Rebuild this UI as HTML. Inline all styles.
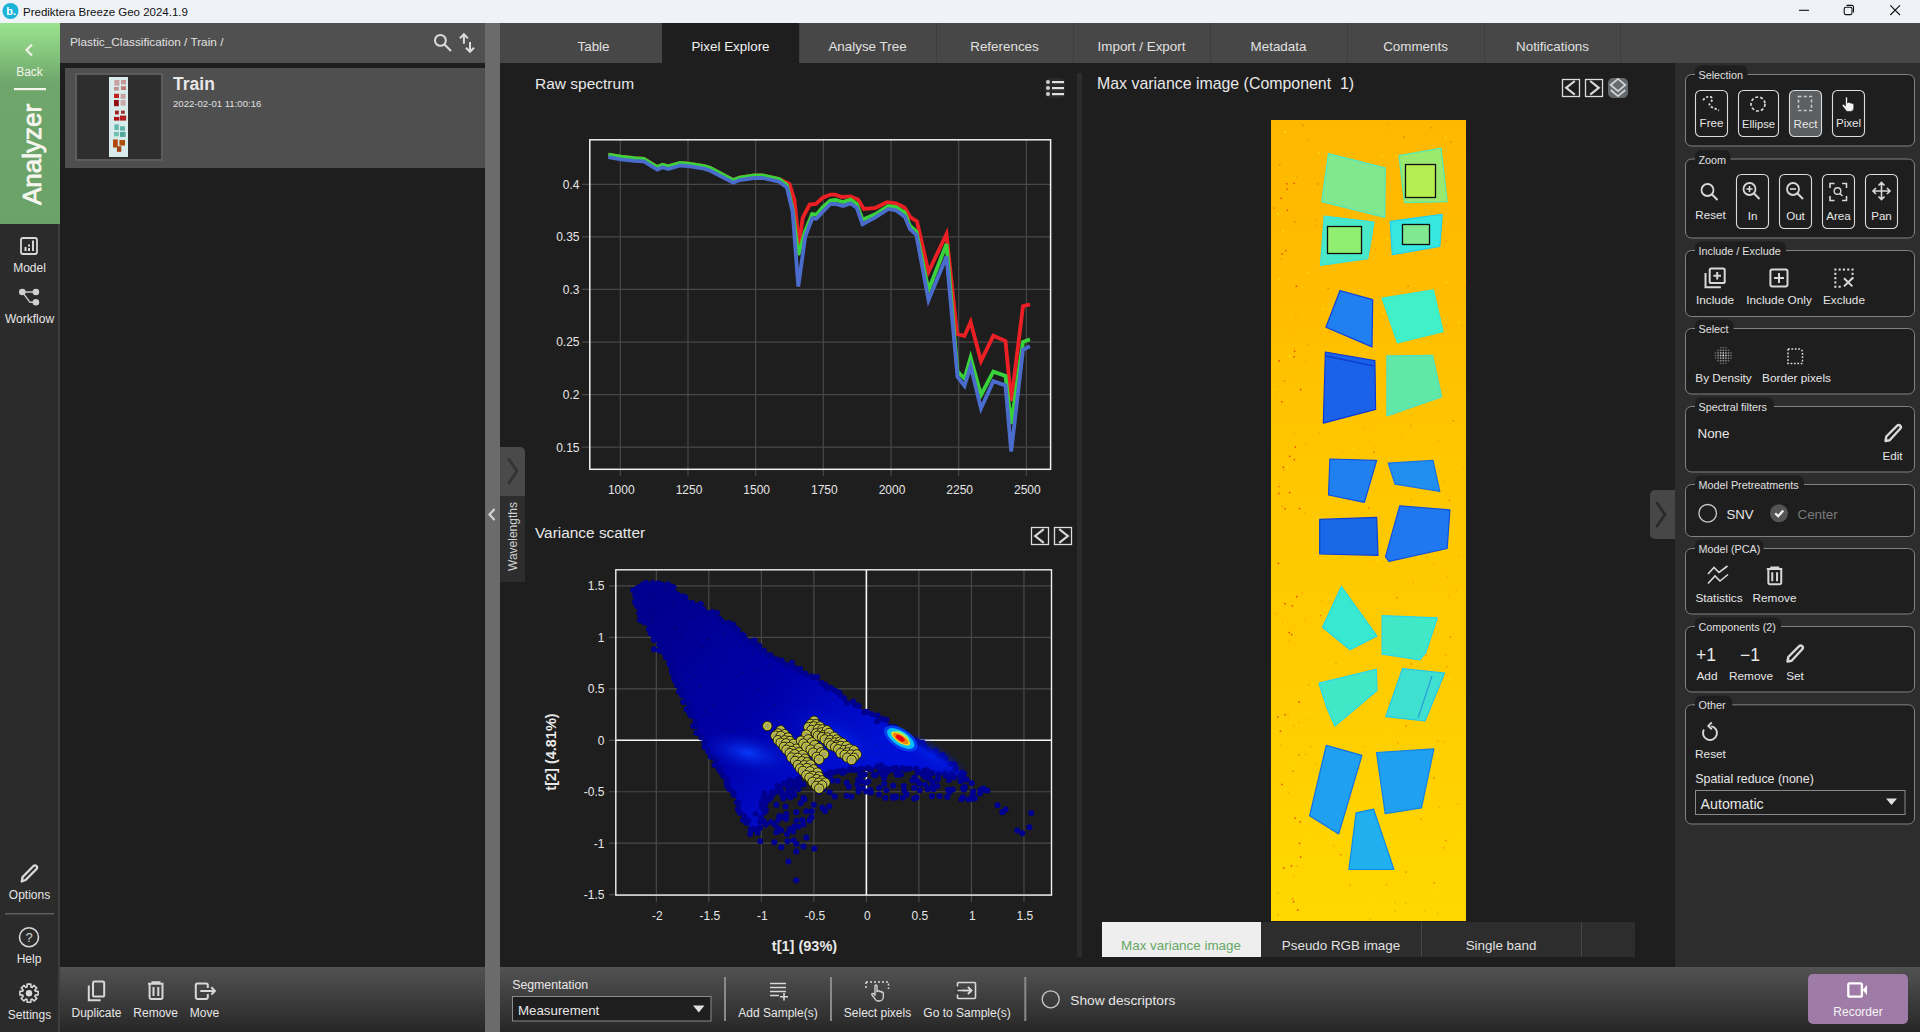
<!DOCTYPE html><html><head><meta charset="utf-8"><style>html,body{margin:0;padding:0;background:#1e1e1e;overflow:hidden}svg{display:block;font-family:"Liberation Sans",sans-serif}</style></head><body><svg width="1920" height="1032" viewBox="0 0 1920 1032"><defs>
<linearGradient id="gGreen" x1="0" y1="0" x2="0" y2="1">
 <stop offset="0" stop-color="#9be38e"/><stop offset="0.3" stop-color="#6ea66c"/><stop offset="1" stop-color="#6aa268"/>
</linearGradient>
<linearGradient id="gTool" x1="0" y1="0" x2="0" y2="1">
 <stop offset="0" stop-color="#525252"/><stop offset="1" stop-color="#272727"/>
</linearGradient>
<linearGradient id="gImg" x1="0" y1="0" x2="0" y2="1">
 <stop offset="0" stop-color="#ffb800"/><stop offset="0.2" stop-color="#ffbc00"/><stop offset="0.4" stop-color="#ffc600"/><stop offset="0.7" stop-color="#ffcc00"/><stop offset="1" stop-color="#ffd800"/>
</linearGradient>
<clipPath id="clipSc"><rect x="616" y="570" width="435" height="325"/></clipPath>
<clipPath id="clipRs"><rect x="590" y="140" width="460" height="329"/></clipPath>
</defs>
<rect x="0" y="0" width="1920" height="1032" fill="#1e1e1e" />
<rect x="0" y="0" width="1920" height="23" fill="#eff3f8" />
<circle cx="10.5" cy="11" r="8" fill="#1cb3d8"/>
<text x="6.3" y="15.3" font-size="11" fill="#ffffff" text-anchor="start" font-weight="bold" >b.</text>
<text x="23" y="15.8" font-size="11.5" fill="#111111" text-anchor="start" font-weight="normal" >Prediktera Breeze Geo 2024.1.9</text>
<line x1="1799" y1="10.3" x2="1809" y2="10.3" stroke="#111" stroke-width="1.1" />
<rect x="1844.2" y="7.2" width="7.8" height="7.4" rx="1.5" fill="none" stroke="#111" stroke-width="1.1"/>
<path d="M1846.5 5.4 h5.5 a1.5 1.5 0 0 1 1.5 1.5 v5.6" fill="none" stroke="#111" stroke-width="1.1"/>
<line x1="1890.3" y1="5.3" x2="1900" y2="15" stroke="#111" stroke-width="1.1" />
<line x1="1900" y1="5.3" x2="1890.3" y2="15" stroke="#111" stroke-width="1.1" />
<rect x="0" y="23" width="60" height="1009" fill="#2b2b2b" />
<rect x="58" y="224" width="2" height="808" fill="#3e3e3e" />
<rect x="0" y="23" width="60" height="201" fill="url(#gGreen)" />
<path d="M32 44.5 L26.5 50 L32 55.5" fill="none" stroke="#f0f0e8" stroke-width="2.2"/>
<text x="29.5" y="76" font-size="12" fill="#f4f4ec" text-anchor="middle" font-weight="normal" >Back</text>
<rect x="14" y="88" width="32" height="2.2" fill="#f4f4ec" />
<text x="40.8" y="154.5" font-size="26" fill="#f6f6ee" text-anchor="middle" font-weight="normal" stroke="#f6f6ee" stroke-width="0.8" transform="rotate(-90 40.8 154.5)">Analyzer</text>
<rect x="21" y="238" width="16" height="16" rx="2" fill="none" stroke="#d8d8d8" stroke-width="1.8"/>
<rect x="24.5" y="247" width="2" height="4" fill="#d8d8d8" />
<rect x="28" y="244.5" width="2" height="2" fill="#d8d8d8" />
<rect x="28" y="248" width="2" height="3" fill="#d8d8d8" />
<rect x="32" y="240.5" width="2" height="10.5" fill="#d8d8d8" />
<text x="29.5" y="272" font-size="12" fill="#e6e6e6" text-anchor="middle" font-weight="normal" >Model</text>
<path d="M22.3 292 H35.9 M22.3 292 L30 302.3 H35.9" fill="none" stroke="#c8c8c8" stroke-width="1.4"/>
<circle cx="22.3" cy="292" r="3.3" fill="#d0d0d0"/>
<circle cx="35.9" cy="292" r="3.3" fill="#d0d0d0"/>
<circle cx="35.9" cy="302.3" r="3.3" fill="#d0d0d0"/>
<text x="29.5" y="322.5" font-size="12" fill="#e6e6e6" text-anchor="middle" font-weight="normal" >Workflow</text>
<path d="M21.8 881.5 L22.6 877 L33.5 866 a2.1 2.1 0 0 1 3 3 L25.6 880 Z" fill="none" stroke="#d8d8d8" stroke-width="2.4" stroke-linejoin="round"/>
<text x="29.5" y="899" font-size="12" fill="#e6e6e6" text-anchor="middle" font-weight="normal" >Options</text>
<rect x="5" y="913" width="49" height="1.5" fill="#5e5e5e" />
<circle cx="29" cy="937.2" r="9.5" fill="none" stroke="#d8d8d8" stroke-width="1.6"/>
<text x="29" y="942" font-size="13" fill="#d8d8d8" text-anchor="middle" font-weight="normal" >?</text>
<text x="29" y="963" font-size="12" fill="#e6e6e6" text-anchor="middle" font-weight="normal" >Help</text>
<path d="M35.31 991.25 L38.11 991.35 L38.11 995.05 L35.31 995.15 L34.84 996.28 L36.75 998.34 L34.14 1000.95 L32.08 999.04 L30.95 999.51 L30.85 1002.31 L27.15 1002.31 L27.05 999.51 L25.92 999.04 L23.86 1000.95 L21.25 998.34 L23.16 996.28 L22.69 995.15 L19.89 995.05 L19.89 991.35 L22.69 991.25 L23.16 990.12 L21.25 988.06 L23.86 985.45 L25.92 987.36 L27.05 986.89 L27.15 984.09 L30.85 984.09 L30.95 986.89 L32.08 987.36 L34.14 985.45 L36.75 988.06 L34.84 990.12 Z" fill="none" stroke="#d8d8d8" stroke-width="1.6" stroke-linejoin="round"/>
<circle cx="29" cy="993.2" r="3.2" fill="#d8d8d8"/>
<text x="29.5" y="1019" font-size="12" fill="#e6e6e6" text-anchor="middle" font-weight="normal" >Settings</text>
<rect x="60" y="23" width="425" height="40" fill="#505050" />
<text x="70" y="45.5" font-size="11.8" fill="#e0e0e0" text-anchor="start" font-weight="normal" >Plastic_Classification / Train /</text>
<circle cx="440.4" cy="40.4" r="5.4" fill="none" stroke="#dcdcdc" stroke-width="2"/>
<line x1="444.6" y1="44.6" x2="451" y2="51" stroke="#dcdcdc" stroke-width="2.1" />
<path d="M463.9 43.8 V34.5 M459.9 38.4 L463.9 34.2 L467.9 38.4 M470 42 V51.5 M466 47.7 L470 51.8 L474 47.7" fill="none" stroke="#dcdcdc" stroke-width="2"/>
<rect x="485" y="23" width="15" height="1009" fill="#6b6b6b" />
<rect x="65" y="68" width="420" height="100" fill="#4f4f4f" />
<rect x="75" y="73" width="88" height="88" fill="#5c5c5c" />
<rect x="77" y="75" width="84" height="84" fill="#2e2e2e" />
<rect x="109" y="77" width="19" height="80" fill="#d8ecec" />
<rect x="114.4" y="80" width="5" height="5.6" fill="#c8a0a0" />
<rect x="121" y="80" width="5" height="4.4" fill="#c89898" />
<rect x="114" y="86.9" width="4.8" height="3.7" fill="#c09090" />
<rect x="121" y="86.25" width="5" height="3.75" fill="#c07878" />
<rect x="114" y="93.75" width="5" height="4.3" fill="#c02020" />
<rect x="114" y="100" width="4.8" height="6.2" fill="#901010" />
<rect x="120.6" y="93.75" width="5" height="5" fill="#c8a0a0" />
<rect x="120.6" y="100" width="5" height="5.6" fill="#c8a8a8" />
<rect x="115" y="110.6" width="3.8" height="3.8" fill="#a02020" />
<rect x="121" y="110.6" width="3.8" height="3.2" fill="#a03030" />
<rect x="114" y="116.9" width="5.4" height="3.7" fill="#b01010" />
<rect x="120" y="115.6" width="6.2" height="5" fill="#b02020" />
<rect x="114.4" y="124.4" width="4.4" height="5.6" fill="#60b8a8" />
<rect x="120" y="126.25" width="5" height="4.4" fill="#60b0a8" />
<rect x="114" y="131.9" width="4.8" height="4.4" fill="#70c0b0" />
<rect x="120" y="131.9" width="5.6" height="5" fill="#50a898" />
<rect x="113" y="139.4" width="4.8" height="8.1" fill="#b04810" />
<rect x="119.4" y="140" width="5.6" height="5.6" fill="#b05010" />
<rect x="116.9" y="146.25" width="4.4" height="5.6" fill="#a04818" />
<text x="173" y="89.5" font-size="17.5" fill="#e8e8e8" text-anchor="start" font-weight="bold" >Train</text>
<text x="173" y="106.5" font-size="9.6" fill="#e0e0e0" text-anchor="start" font-weight="normal" >2022-02-01 11:00:16</text>
<rect x="60" y="967" width="425" height="65" fill="url(#gTool)" />
<path d="M88.8 985.5 V1000.2 H100.7" fill="none" stroke="#d8d8d8" stroke-width="2"/>
<rect x="93" y="981.6" width="11.2" height="14.9" rx="1.6" fill="none" stroke="#d8d8d8" stroke-width="2"/>
<text x="96.5" y="1017" font-size="12" fill="#e6e6e6" text-anchor="middle" font-weight="normal" >Duplicate</text>
<path d="M148 983.8 H163.5 M152.5 983.3 V982.3 H159.5 V983.3 M149.6 984 V997.5 a1.6 1.6 0 0 0 1.6 1.6 H160.9 a1.6 1.6 0 0 0 1.6 -1.6 V984 M153.5 987 V996 M158.3 987 V996" fill="none" stroke="#d8d8d8" stroke-width="2"/>
<text x="155.7" y="1017" font-size="12" fill="#e6e6e6" text-anchor="middle" font-weight="normal" >Remove</text>
<path d="M207.8 988 V985 a1.6 1.6 0 0 0 -1.6 -1.6 H197.4 a1.6 1.6 0 0 0 -1.6 1.6 V997.3 a1.6 1.6 0 0 0 1.6 1.6 H206.2 a1.6 1.6 0 0 0 1.6 -1.6 V994 M200.3 990.9 H214.5 M211.3 987.3 L214.9 990.9 L211.3 994.5" fill="none" stroke="#d8d8d8" stroke-width="2"/>
<text x="204.4" y="1017" font-size="12" fill="#e6e6e6" text-anchor="middle" font-weight="normal" >Move</text>
<rect x="500" y="23" width="1420" height="40" fill="#474747" />
<text x="593.5" y="51" font-size="13.4" fill="#e0e0e0" text-anchor="middle" font-weight="normal" >Table</text>
<rect x="662" y="23" width="137" height="40" fill="#1e1e1e" />
<text x="730.5" y="51" font-size="13.4" fill="#f0f0f0" text-anchor="middle" font-weight="normal" >Pixel Explore</text>
<rect x="799" y="23" width="1" height="40" fill="#3e3e3e" />
<text x="867.5" y="51" font-size="13.4" fill="#e0e0e0" text-anchor="middle" font-weight="normal" >Analyse Tree</text>
<rect x="936" y="23" width="1" height="40" fill="#3e3e3e" />
<text x="1004.5" y="51" font-size="13.4" fill="#e0e0e0" text-anchor="middle" font-weight="normal" >References</text>
<rect x="1073" y="23" width="1" height="40" fill="#3e3e3e" />
<text x="1141.5" y="51" font-size="13.4" fill="#e0e0e0" text-anchor="middle" font-weight="normal" >Import / Export</text>
<rect x="1210" y="23" width="1" height="40" fill="#3e3e3e" />
<text x="1278.5" y="51" font-size="13.4" fill="#e0e0e0" text-anchor="middle" font-weight="normal" >Metadata</text>
<rect x="1347" y="23" width="1" height="40" fill="#3e3e3e" />
<text x="1415.5" y="51" font-size="13.4" fill="#e0e0e0" text-anchor="middle" font-weight="normal" >Comments</text>
<rect x="1484" y="23" width="1" height="40" fill="#3e3e3e" />
<text x="1552.5" y="51" font-size="13.4" fill="#e0e0e0" text-anchor="middle" font-weight="normal" >Notifications</text>
<rect x="1620" y="23" width="1" height="40" fill="#3e3e3e" />
<rect x="500" y="63" width="1175" height="904" fill="#1e1e1e" />
<rect x="1077" y="73" width="5" height="884" fill="#2b2b2b" />
<text x="535" y="89" font-size="15.5" fill="#e8e8e8" text-anchor="start" font-weight="normal" >Raw spectrum</text>
<rect x="1045" y="78" width="20" height="20" rx="5" fill="#2a2a2a"/>
<circle cx="1048" cy="82" r="2" fill="#cfcfcf"/>
<rect x="1052" y="81" width="12" height="2.2" fill="#e0e0e0" />
<circle cx="1048" cy="88" r="2" fill="#cfcfcf"/>
<rect x="1052" y="87" width="12" height="2.2" fill="#e0e0e0" />
<circle cx="1048" cy="94" r="2" fill="#cfcfcf"/>
<rect x="1052" y="93" width="12" height="2.2" fill="#e0e0e0" />
<line x1="620.3" y1="140" x2="620.3" y2="476" stroke="#484848" stroke-width="1.2" />
<line x1="687.98" y1="140" x2="687.98" y2="476" stroke="#484848" stroke-width="1.2" />
<line x1="755.66" y1="140" x2="755.66" y2="476" stroke="#484848" stroke-width="1.2" />
<line x1="823.3399999999999" y1="140" x2="823.3399999999999" y2="476" stroke="#484848" stroke-width="1.2" />
<line x1="891.02" y1="140" x2="891.02" y2="476" stroke="#484848" stroke-width="1.2" />
<line x1="958.7" y1="140" x2="958.7" y2="476" stroke="#484848" stroke-width="1.2" />
<line x1="1026.38" y1="140" x2="1026.38" y2="476" stroke="#484848" stroke-width="1.2" />
<line x1="582" y1="184.3" x2="1050" y2="184.3" stroke="#484848" stroke-width="1.2" />
<line x1="582" y1="236.88" x2="1050" y2="236.88" stroke="#484848" stroke-width="1.2" />
<line x1="582" y1="289.46000000000004" x2="1050" y2="289.46000000000004" stroke="#484848" stroke-width="1.2" />
<line x1="582" y1="342.04" x2="1050" y2="342.04" stroke="#484848" stroke-width="1.2" />
<line x1="582" y1="394.62" x2="1050" y2="394.62" stroke="#484848" stroke-width="1.2" />
<line x1="582" y1="447.2" x2="1050" y2="447.2" stroke="#484848" stroke-width="1.2" />
<rect x="589.8" y="139.8" width="460.8" height="329.5" fill="none" stroke="#f0f0f0" stroke-width="1.5"/>
<text x="621.3" y="493.5" font-size="12" fill="#e6e6e6" text-anchor="middle" font-weight="normal" >1000</text>
<text x="688.98" y="493.5" font-size="12" fill="#e6e6e6" text-anchor="middle" font-weight="normal" >1250</text>
<text x="756.66" y="493.5" font-size="12" fill="#e6e6e6" text-anchor="middle" font-weight="normal" >1500</text>
<text x="824.3399999999999" y="493.5" font-size="12" fill="#e6e6e6" text-anchor="middle" font-weight="normal" >1750</text>
<text x="892.02" y="493.5" font-size="12" fill="#e6e6e6" text-anchor="middle" font-weight="normal" >2000</text>
<text x="959.7" y="493.5" font-size="12" fill="#e6e6e6" text-anchor="middle" font-weight="normal" >2250</text>
<text x="1027.38" y="493.5" font-size="12" fill="#e6e6e6" text-anchor="middle" font-weight="normal" >2500</text>
<text x="579.5" y="188.60000000000002" font-size="12" fill="#e6e6e6" text-anchor="end" font-weight="normal" >0.4</text>
<text x="579.5" y="241.18" font-size="12" fill="#e6e6e6" text-anchor="end" font-weight="normal" >0.35</text>
<text x="579.5" y="293.76000000000005" font-size="12" fill="#e6e6e6" text-anchor="end" font-weight="normal" >0.3</text>
<text x="579.5" y="346.34000000000003" font-size="12" fill="#e6e6e6" text-anchor="end" font-weight="normal" >0.25</text>
<text x="579.5" y="398.92" font-size="12" fill="#e6e6e6" text-anchor="end" font-weight="normal" >0.2</text>
<text x="579.5" y="451.5" font-size="12" fill="#e6e6e6" text-anchor="end" font-weight="normal" >0.15</text>
<polyline points="608.3,154.6 620.8,156.7 634.4,158.2 643.8,158.8 657.3,167.1 662.5,164.7 668.2,166.4 680.2,162.9 688.5,163.7 704.2,166.0 710.4,168.1 733.3,180.1 739.6,177.5 754.2,175.4 762.5,175.4 779.2,179.1 789.4,183.9 794.5,200.2 798.9,245.0 802.7,217.9 809.6,204.6 815.9,204.0 822.8,197.7 830.4,194.6 835.4,194.6 841.7,197.0 850.5,196.4 858.1,199.6 863.8,209.0 875.7,207.8 887.0,202.1 895.9,203.4 900.0,205.2 904.7,207.6 910.5,217.4 917.0,221.5 928.5,272.0 946.5,234.0 957.0,334.0 964.5,336.0 970.6,322.0 981.0,361.0 993.3,335.8 1005.5,341.0 1011.2,401.0 1023.0,306.2 1029.9,304.4" stroke="#ec2024" stroke-width="3.8" fill="none" stroke-linejoin="miter" stroke-miterlimit="4" clip-path="url(#clipRs)"/>
<polyline points="608.3,154.6 620.8,156.7 634.4,158.2 643.8,158.8 657.3,167.1 662.5,164.7 668.2,166.4 680.2,162.9 688.5,163.7 704.2,166.0 710.4,168.1 733.3,180.1 739.6,177.5 754.2,175.4 762.5,175.4 779.2,179.1 786.9,185.0 792.6,209.0 798.3,255.0 805.2,231.0 812.1,214.0 816.5,214.6 822.8,207.0 830.4,200.5 835.4,199.9 843.0,202.0 850.5,199.6 856.8,204.0 862.5,219.7 875.7,214.0 888.3,205.9 895.9,207.0 904.7,212.6 909.9,225.6 916.3,231.4 928.5,290.0 946.5,244.0 957.5,371.6 964.5,378.5 970.6,357.5 981.0,395.0 993.3,371.6 1005.5,376.0 1011.2,424.0 1023.0,342.0 1029.9,339.3" stroke="#3ad23a" stroke-width="3.8" fill="none" stroke-linejoin="miter" stroke-miterlimit="4" clip-path="url(#clipRs)"/>
<polyline points="608.3,157.2 620.8,159.3 634.4,160.8 643.8,161.4 657.3,169.7 662.5,167.3 668.2,169.0 680.2,165.5 688.5,166.2 704.2,168.6 710.4,170.7 733.3,182.7 739.6,180.1 754.2,178.0 762.5,178.0 779.2,181.7 786.9,187.6 792.6,211.6 798.3,286.5 805.2,236.8 812.1,218.5 816.5,218.5 822.8,211.6 830.4,204.0 835.4,203.8 843.0,205.9 850.5,203.4 856.8,207.8 862.5,224.2 875.7,217.2 888.3,209.0 895.9,210.3 904.7,216.6 909.9,229.0 916.3,234.9 928.5,300.0 946.5,256.5 957.5,376.8 964.5,386.0 970.6,366.0 981.0,408.5 993.3,381.2 1005.5,385.5 1011.2,451.5 1023.0,349.8 1029.9,346.3" stroke="#4a6ccc" stroke-width="3.8" fill="none" stroke-linejoin="miter" stroke-miterlimit="4" clip-path="url(#clipRs)"/>
<text x="535" y="538" font-size="15.4" fill="#e8e8e8" text-anchor="start" font-weight="normal" >Variance scatter</text>
<rect x="1031.5" y="527.5" width="17" height="17" fill="none" stroke="#dcdcdc" stroke-width="1.3"/>
<path d="M1043.8 529.2 L1035.2 536 L1043.8 542.8" fill="none" stroke="#d8d8d8" stroke-width="2.2"/>
<rect x="1054.5" y="527.5" width="17" height="17" fill="none" stroke="#dcdcdc" stroke-width="1.3"/>
<path d="M1059.2 529.2 L1067.8 536 L1059.2 542.8" fill="none" stroke="#d8d8d8" stroke-width="2.2"/>
<line x1="656.3199999999999" y1="570" x2="656.3199999999999" y2="902" stroke="#484848" stroke-width="1.2" />
<text x="657.3199999999999" y="920" font-size="12" fill="#e6e6e6" text-anchor="middle" font-weight="normal" >-2</text>
<line x1="708.8399999999999" y1="570" x2="708.8399999999999" y2="902" stroke="#484848" stroke-width="1.2" />
<text x="709.8399999999999" y="920" font-size="12" fill="#e6e6e6" text-anchor="middle" font-weight="normal" >-1.5</text>
<line x1="761.36" y1="570" x2="761.36" y2="902" stroke="#484848" stroke-width="1.2" />
<text x="762.36" y="920" font-size="12" fill="#e6e6e6" text-anchor="middle" font-weight="normal" >-1</text>
<line x1="813.88" y1="570" x2="813.88" y2="902" stroke="#484848" stroke-width="1.2" />
<text x="814.88" y="920" font-size="12" fill="#e6e6e6" text-anchor="middle" font-weight="normal" >-0.5</text>
<line x1="866.4" y1="570" x2="866.4" y2="902" stroke="#484848" stroke-width="1.2" />
<text x="867.4" y="920" font-size="12" fill="#e6e6e6" text-anchor="middle" font-weight="normal" >0</text>
<line x1="918.92" y1="570" x2="918.92" y2="902" stroke="#484848" stroke-width="1.2" />
<text x="919.92" y="920" font-size="12" fill="#e6e6e6" text-anchor="middle" font-weight="normal" >0.5</text>
<line x1="971.4399999999999" y1="570" x2="971.4399999999999" y2="902" stroke="#484848" stroke-width="1.2" />
<text x="972.4399999999999" y="920" font-size="12" fill="#e6e6e6" text-anchor="middle" font-weight="normal" >1</text>
<line x1="1023.96" y1="570" x2="1023.96" y2="902" stroke="#484848" stroke-width="1.2" />
<text x="1024.96" y="920" font-size="12" fill="#e6e6e6" text-anchor="middle" font-weight="normal" >1.5</text>
<line x1="609" y1="894.65" x2="1051" y2="894.65" stroke="#484848" stroke-width="1.2" />
<text x="604.5" y="898.9499999999999" font-size="12" fill="#e6e6e6" text-anchor="end" font-weight="normal" >-1.5</text>
<line x1="609" y1="843.1999999999999" x2="1051" y2="843.1999999999999" stroke="#484848" stroke-width="1.2" />
<text x="604.5" y="847.4999999999999" font-size="12" fill="#e6e6e6" text-anchor="end" font-weight="normal" >-1</text>
<line x1="609" y1="791.75" x2="1051" y2="791.75" stroke="#484848" stroke-width="1.2" />
<text x="604.5" y="796.05" font-size="12" fill="#e6e6e6" text-anchor="end" font-weight="normal" >-0.5</text>
<line x1="609" y1="740.3" x2="1051" y2="740.3" stroke="#484848" stroke-width="1.2" />
<text x="604.5" y="744.5999999999999" font-size="12" fill="#e6e6e6" text-anchor="end" font-weight="normal" >0</text>
<line x1="609" y1="688.8499999999999" x2="1051" y2="688.8499999999999" stroke="#484848" stroke-width="1.2" />
<text x="604.5" y="693.1499999999999" font-size="12" fill="#e6e6e6" text-anchor="end" font-weight="normal" >0.5</text>
<line x1="609" y1="637.4" x2="1051" y2="637.4" stroke="#484848" stroke-width="1.2" />
<text x="604.5" y="641.6999999999999" font-size="12" fill="#e6e6e6" text-anchor="end" font-weight="normal" >1</text>
<line x1="609" y1="585.9499999999999" x2="1051" y2="585.9499999999999" stroke="#484848" stroke-width="1.2" />
<text x="604.5" y="590.2499999999999" font-size="12" fill="#e6e6e6" text-anchor="end" font-weight="normal" >1.5</text>
<rect x="615.8" y="569.8" width="435.7" height="325.3" fill="none" stroke="#f0f0f0" stroke-width="1.4"/>
<line x1="866.4" y1="570" x2="866.4" y2="895" stroke="#f4f4f4" stroke-width="1.6" />
<line x1="616" y1="740.3" x2="1051" y2="740.3" stroke="#f4f4f4" stroke-width="1.6" />
<text x="804.5" y="950.5" font-size="14.5" fill="#e8e8e8" text-anchor="middle" font-weight="bold" >t[1] (93%)</text>
<text x="555.8" y="752" font-size="14.5" fill="#e8e8e8" text-anchor="middle" font-weight="bold" transform="rotate(-90 555.8 752)">t[2] (4.81%)</text>
<defs><radialGradient id="glowA" cx="0.5" cy="0.5" r="0.5"><stop offset="0" stop-color="#0a3cff" stop-opacity="0.95"/><stop offset="1" stop-color="#0010c0" stop-opacity="0"/></radialGradient><radialGradient id="glowB" cx="0.5" cy="0.5" r="0.5"><stop offset="0" stop-color="#0020e8" stop-opacity="0.9"/><stop offset="1" stop-color="#0010c0" stop-opacity="0"/></radialGradient></defs>
<g clip-path="url(#clipSc)">
<defs><linearGradient id="gCloud" gradientUnits="userSpaceOnUse" x1="660" y1="600" x2="860" y2="770"><stop offset="0" stop-color="#00008e"/><stop offset="0.55" stop-color="#0000a8"/><stop offset="1" stop-color="#0010d8"/></linearGradient></defs>
<polygon points="634.0,592.0 645.0,585.0 658.0,584.0 673.0,589.0 688.0,602.0 708.0,611.0 728.0,623.0 756.0,644.0 766.0,652.0 813.0,677.0 866.0,712.0 893.0,726.0 920.0,743.0 950.0,762.0 965.0,776.0 940.0,774.0 900.0,768.0 866.0,768.0 830.0,772.0 800.0,778.0 778.0,786.0 765.0,805.0 761.0,830.0 752.0,832.0 735.0,797.0 716.0,765.0 700.0,735.0 683.0,696.0 673.0,671.0 660.0,646.0 648.0,628.0 640.0,615.0 635.0,602.0" fill="url(#gCloud)" />
<rect x="738.4" y="780.4" width="1.6" height="0.9" fill="#181830" opacity="0.55"/>
<rect x="740.0" y="701.1" width="1.6" height="0.9" fill="#181830" opacity="0.55"/>
<rect x="754.3" y="670.4" width="1.6" height="0.9" fill="#181830" opacity="0.55"/>
<rect x="775.6" y="753.2" width="1.6" height="0.9" fill="#181830" opacity="0.55"/>
<rect x="770.0" y="766.0" width="1.6" height="0.9" fill="#181830" opacity="0.55"/>
<rect x="758.7" y="688.4" width="1.6" height="0.9" fill="#181830" opacity="0.55"/>
<rect x="686.7" y="643.1" width="1.6" height="0.9" fill="#181830" opacity="0.55"/>
<rect x="806.8" y="774.7" width="1.6" height="0.9" fill="#181830" opacity="0.55"/>
<rect x="703.1" y="611.0" width="1.6" height="0.9" fill="#181830" opacity="0.55"/>
<rect x="769.4" y="758.5" width="1.6" height="0.9" fill="#181830" opacity="0.55"/>
<rect x="709.8" y="666.9" width="1.6" height="0.9" fill="#181830" opacity="0.55"/>
<rect x="679.4" y="635.6" width="1.6" height="0.9" fill="#181830" opacity="0.55"/>
<rect x="831.8" y="697.8" width="1.6" height="0.9" fill="#181830" opacity="0.55"/>
<rect x="774.4" y="704.4" width="1.6" height="0.9" fill="#181830" opacity="0.55"/>
<rect x="776.2" y="720.1" width="1.6" height="0.9" fill="#181830" opacity="0.55"/>
<rect x="783.0" y="674.9" width="1.6" height="0.9" fill="#181830" opacity="0.55"/>
<rect x="884.3" y="744.9" width="1.6" height="0.9" fill="#181830" opacity="0.55"/>
<rect x="681.1" y="673.3" width="1.6" height="0.9" fill="#181830" opacity="0.55"/>
<rect x="874.7" y="744.4" width="1.6" height="0.9" fill="#181830" opacity="0.55"/>
<rect x="874.3" y="752.1" width="1.6" height="0.9" fill="#181830" opacity="0.55"/>
<rect x="800.7" y="773.6" width="1.6" height="0.9" fill="#181830" opacity="0.55"/>
<rect x="706.7" y="638.9" width="1.6" height="0.9" fill="#181830" opacity="0.55"/>
<rect x="651.8" y="622.3" width="1.6" height="0.9" fill="#181830" opacity="0.55"/>
<rect x="857.5" y="768.6" width="1.6" height="0.9" fill="#181830" opacity="0.55"/>
<rect x="825.6" y="765.9" width="1.6" height="0.9" fill="#181830" opacity="0.55"/>
<rect x="755.3" y="741.8" width="1.6" height="0.9" fill="#181830" opacity="0.55"/>
<rect x="827.5" y="721.1" width="1.6" height="0.9" fill="#181830" opacity="0.55"/>
<rect x="650.8" y="615.6" width="1.6" height="0.9" fill="#181830" opacity="0.55"/>
<rect x="804.1" y="768.6" width="1.6" height="0.9" fill="#181830" opacity="0.55"/>
<rect x="682.2" y="631.6" width="1.6" height="0.9" fill="#181830" opacity="0.55"/>
<rect x="674.0" y="658.2" width="1.6" height="0.9" fill="#181830" opacity="0.55"/>
<rect x="711.8" y="704.6" width="1.6" height="0.9" fill="#181830" opacity="0.55"/>
<rect x="918.8" y="745.3" width="1.6" height="0.9" fill="#181830" opacity="0.55"/>
<rect x="719.5" y="770.2" width="1.6" height="0.9" fill="#181830" opacity="0.55"/>
<rect x="703.8" y="709.7" width="1.6" height="0.9" fill="#181830" opacity="0.55"/>
<rect x="802.2" y="716.5" width="1.6" height="0.9" fill="#181830" opacity="0.55"/>
<rect x="739.0" y="646.6" width="1.6" height="0.9" fill="#181830" opacity="0.55"/>
<rect x="890.6" y="731.7" width="1.6" height="0.9" fill="#181830" opacity="0.55"/>
<rect x="747.4" y="738.7" width="1.6" height="0.9" fill="#181830" opacity="0.55"/>
<rect x="862.4" y="758.3" width="1.6" height="0.9" fill="#181830" opacity="0.55"/>
<rect x="724.9" y="716.6" width="1.6" height="0.9" fill="#181830" opacity="0.55"/>
<rect x="723.3" y="633.4" width="1.6" height="0.9" fill="#181830" opacity="0.55"/>
<rect x="841.8" y="727.0" width="1.6" height="0.9" fill="#181830" opacity="0.55"/>
<rect x="790.2" y="757.1" width="1.6" height="0.9" fill="#181830" opacity="0.55"/>
<rect x="863.2" y="760.8" width="1.6" height="0.9" fill="#181830" opacity="0.55"/>
<rect x="779.9" y="733.5" width="1.6" height="0.9" fill="#181830" opacity="0.55"/>
<rect x="707.8" y="712.6" width="1.6" height="0.9" fill="#181830" opacity="0.55"/>
<rect x="649.2" y="593.5" width="1.6" height="0.9" fill="#181830" opacity="0.55"/>
<rect x="861.6" y="714.9" width="1.6" height="0.9" fill="#181830" opacity="0.55"/>
<rect x="863.0" y="736.0" width="1.6" height="0.9" fill="#181830" opacity="0.55"/>
<rect x="756.3" y="752.6" width="1.6" height="0.9" fill="#181830" opacity="0.55"/>
<rect x="902.3" y="767.7" width="1.6" height="0.9" fill="#181830" opacity="0.55"/>
<rect x="674.3" y="627.2" width="1.6" height="0.9" fill="#181830" opacity="0.55"/>
<rect x="675.8" y="592.1" width="1.6" height="0.9" fill="#181830" opacity="0.55"/>
<rect x="911.3" y="751.5" width="1.6" height="0.9" fill="#181830" opacity="0.55"/>
<rect x="842.9" y="754.1" width="1.6" height="0.9" fill="#181830" opacity="0.55"/>
<rect x="672.0" y="605.1" width="1.6" height="0.9" fill="#181830" opacity="0.55"/>
<rect x="742.1" y="671.9" width="1.6" height="0.9" fill="#181830" opacity="0.55"/>
<rect x="730.4" y="731.7" width="1.6" height="0.9" fill="#181830" opacity="0.55"/>
<rect x="757.8" y="650.8" width="1.6" height="0.9" fill="#181830" opacity="0.55"/>
<rect x="779.7" y="743.5" width="1.6" height="0.9" fill="#181830" opacity="0.55"/>
<rect x="751.0" y="729.5" width="1.6" height="0.9" fill="#181830" opacity="0.55"/>
<rect x="797.3" y="748.3" width="1.6" height="0.9" fill="#181830" opacity="0.55"/>
<rect x="699.0" y="686.4" width="1.6" height="0.9" fill="#181830" opacity="0.55"/>
<rect x="751.1" y="755.5" width="1.6" height="0.9" fill="#181830" opacity="0.55"/>
<rect x="730.8" y="629.0" width="1.6" height="0.9" fill="#181830" opacity="0.55"/>
<rect x="863.1" y="746.3" width="1.6" height="0.9" fill="#181830" opacity="0.55"/>
<rect x="768.4" y="665.9" width="1.6" height="0.9" fill="#181830" opacity="0.55"/>
<rect x="706.0" y="639.0" width="1.6" height="0.9" fill="#181830" opacity="0.55"/>
<rect x="761.4" y="766.2" width="1.6" height="0.9" fill="#181830" opacity="0.55"/>
<rect x="714.7" y="679.5" width="1.6" height="0.9" fill="#181830" opacity="0.55"/>
<rect x="810.1" y="739.7" width="1.6" height="0.9" fill="#181830" opacity="0.55"/>
<rect x="751.5" y="652.0" width="1.6" height="0.9" fill="#181830" opacity="0.55"/>
<rect x="851.9" y="737.1" width="1.6" height="0.9" fill="#181830" opacity="0.55"/>
<rect x="694.3" y="675.0" width="1.6" height="0.9" fill="#181830" opacity="0.55"/>
<rect x="680.3" y="679.7" width="1.6" height="0.9" fill="#181830" opacity="0.55"/>
<rect x="701.3" y="646.8" width="1.6" height="0.9" fill="#181830" opacity="0.55"/>
<rect x="865.0" y="758.0" width="1.6" height="0.9" fill="#181830" opacity="0.55"/>
<rect x="689.5" y="617.0" width="1.6" height="0.9" fill="#181830" opacity="0.55"/>
<rect x="719.2" y="651.9" width="1.6" height="0.9" fill="#181830" opacity="0.55"/>
<rect x="672.5" y="663.8" width="1.6" height="0.9" fill="#181830" opacity="0.55"/>
<rect x="702.8" y="715.8" width="1.6" height="0.9" fill="#181830" opacity="0.55"/>
<rect x="674.2" y="627.3" width="1.6" height="0.9" fill="#181830" opacity="0.55"/>
<rect x="767.7" y="747.2" width="1.6" height="0.9" fill="#181830" opacity="0.55"/>
<circle cx="633.1" cy="590.3" r="3" fill="#000090"/>
<circle cx="637.5" cy="588.1" r="3" fill="#000090"/>
<circle cx="639.7" cy="587.8" r="3" fill="#000090"/>
<circle cx="640.0" cy="586.8" r="3" fill="#000090"/>
<circle cx="642.7" cy="584.7" r="3" fill="#000090"/>
<circle cx="646.1" cy="582.7" r="3" fill="#000090"/>
<circle cx="651.1" cy="586.1" r="3" fill="#000090"/>
<circle cx="652.9" cy="582.9" r="3" fill="#000090"/>
<circle cx="658.6" cy="586.2" r="3" fill="#000090"/>
<circle cx="662.1" cy="584.7" r="3" fill="#000090"/>
<circle cx="667.9" cy="584.2" r="3" fill="#000090"/>
<circle cx="671.0" cy="586.7" r="3" fill="#000090"/>
<circle cx="671.2" cy="587.1" r="3" fill="#000090"/>
<circle cx="675.0" cy="593.2" r="3" fill="#000090"/>
<circle cx="677.4" cy="594.6" r="3" fill="#000090"/>
<circle cx="682.7" cy="596.2" r="3" fill="#000090"/>
<circle cx="685.2" cy="597.2" r="3" fill="#000090"/>
<circle cx="685.8" cy="600.5" r="3" fill="#000090"/>
<circle cx="692.2" cy="603.1" r="3" fill="#000090"/>
<circle cx="693.7" cy="605.4" r="3" fill="#000090"/>
<circle cx="697.8" cy="605.5" r="3" fill="#000090"/>
<circle cx="702.8" cy="609.0" r="3" fill="#000090"/>
<circle cx="703.4" cy="609.9" r="3" fill="#000090"/>
<circle cx="708.1" cy="612.9" r="3" fill="#000090"/>
<circle cx="712.5" cy="611.9" r="3" fill="#000090"/>
<circle cx="717.1" cy="613.1" r="3" fill="#000090"/>
<circle cx="717.6" cy="618.3" r="3" fill="#000090"/>
<circle cx="719.6" cy="618.9" r="3" fill="#000090"/>
<circle cx="722.4" cy="621.8" r="3" fill="#000090"/>
<circle cx="729.3" cy="623.4" r="3" fill="#000090"/>
<circle cx="733.0" cy="624.4" r="3" fill="#000090"/>
<circle cx="735.2" cy="628.1" r="3" fill="#000090"/>
<circle cx="737.7" cy="629.8" r="3" fill="#000090"/>
<circle cx="742.1" cy="634.6" r="3" fill="#000090"/>
<circle cx="743.4" cy="635.5" r="3" fill="#000090"/>
<circle cx="744.5" cy="638.0" r="3" fill="#000090"/>
<circle cx="750.5" cy="641.8" r="3" fill="#000090"/>
<circle cx="754.5" cy="640.6" r="3" fill="#000090"/>
<circle cx="755.4" cy="644.8" r="3" fill="#000090"/>
<circle cx="756.1" cy="645.8" r="3" fill="#000090"/>
<circle cx="759.3" cy="646.1" r="3" fill="#000090"/>
<circle cx="761.3" cy="651.3" r="3" fill="#000090"/>
<circle cx="764.1" cy="650.7" r="3" fill="#000090"/>
<circle cx="768.8" cy="655.6" r="3" fill="#000090"/>
<circle cx="770.6" cy="655.3" r="3" fill="#000090"/>
<circle cx="776.3" cy="659.3" r="3" fill="#000090"/>
<circle cx="781.0" cy="661.0" r="3" fill="#000090"/>
<circle cx="781.7" cy="660.5" r="3" fill="#000090"/>
<circle cx="785.4" cy="664.6" r="3" fill="#000090"/>
<circle cx="791.8" cy="662.8" r="3" fill="#000090"/>
<circle cx="791.2" cy="664.9" r="3" fill="#000090"/>
<circle cx="794.9" cy="668.0" r="3" fill="#000090"/>
<circle cx="800.0" cy="668.7" r="3" fill="#000090"/>
<circle cx="800.4" cy="671.2" r="3" fill="#000090"/>
<circle cx="805.6" cy="673.8" r="3" fill="#000090"/>
<circle cx="811.9" cy="676.2" r="3" fill="#000090"/>
<circle cx="813.1" cy="677.6" r="3" fill="#000090"/>
<circle cx="817.2" cy="677.0" r="3" fill="#000090"/>
<circle cx="821.6" cy="682.8" r="3" fill="#000090"/>
<circle cx="824.8" cy="685.1" r="3" fill="#000090"/>
<circle cx="825.7" cy="685.2" r="3" fill="#000090"/>
<circle cx="827.6" cy="688.6" r="3" fill="#000090"/>
<circle cx="830.7" cy="688.0" r="3" fill="#000090"/>
<circle cx="834.7" cy="690.6" r="3" fill="#000090"/>
<circle cx="838.7" cy="692.3" r="3" fill="#000090"/>
<circle cx="840.3" cy="694.9" r="3" fill="#000090"/>
<circle cx="844.1" cy="698.2" r="3" fill="#000090"/>
<circle cx="847.1" cy="702.9" r="3" fill="#000090"/>
<circle cx="853.3" cy="701.5" r="3" fill="#000090"/>
<circle cx="854.8" cy="704.7" r="3" fill="#000090"/>
<circle cx="858.7" cy="705.7" r="3" fill="#000090"/>
<circle cx="864.4" cy="712.3" r="3" fill="#000090"/>
<circle cx="865.8" cy="711.9" r="3" fill="#000090"/>
<circle cx="867.3" cy="711.8" r="3" fill="#000090"/>
<circle cx="872.0" cy="714.3" r="3" fill="#000090"/>
<circle cx="877.8" cy="715.6" r="3" fill="#000090"/>
<circle cx="877.1" cy="721.3" r="3" fill="#000090"/>
<circle cx="883.0" cy="719.0" r="3" fill="#000090"/>
<circle cx="886.5" cy="720.1" r="3" fill="#000090"/>
<circle cx="889.8" cy="726.6" r="3" fill="#000090"/>
<circle cx="894.8" cy="727.0" r="3" fill="#000090"/>
<circle cx="895.2" cy="727.5" r="3" fill="#000090"/>
<circle cx="898.1" cy="731.6" r="3" fill="#000090"/>
<circle cx="903.3" cy="733.8" r="3" fill="#000090"/>
<circle cx="905.6" cy="733.1" r="3" fill="#000090"/>
<circle cx="911.4" cy="739.0" r="3" fill="#000090"/>
<circle cx="915.0" cy="740.3" r="3" fill="#000090"/>
<circle cx="918.2" cy="742.1" r="3" fill="#000090"/>
<circle cx="918.6" cy="743.1" r="3" fill="#000090"/>
<circle cx="922.6" cy="742.8" r="3" fill="#000090"/>
<circle cx="924.3" cy="746.1" r="3" fill="#000090"/>
<circle cx="928.8" cy="750.3" r="3" fill="#000090"/>
<circle cx="935.6" cy="751.2" r="3" fill="#000090"/>
<circle cx="938.9" cy="756.0" r="3" fill="#000090"/>
<circle cx="942.3" cy="755.0" r="3" fill="#000090"/>
<circle cx="941.9" cy="756.4" r="3" fill="#000090"/>
<circle cx="945.2" cy="758.4" r="3" fill="#000090"/>
<circle cx="950.6" cy="764.0" r="3" fill="#000090"/>
<circle cx="954.2" cy="764.2" r="3" fill="#000090"/>
<circle cx="955.8" cy="768.2" r="3" fill="#000090"/>
<circle cx="955.4" cy="769.8" r="3" fill="#000090"/>
<circle cx="962.0" cy="772.7" r="3" fill="#000090"/>
<circle cx="963.8" cy="773.6" r="3" fill="#000090"/>
<circle cx="963.4" cy="777.4" r="3" fill="#000090"/>
<circle cx="960.6" cy="777.2" r="3" fill="#000090"/>
<circle cx="960.2" cy="774.9" r="3" fill="#000090"/>
<circle cx="953.8" cy="777.4" r="3" fill="#000090"/>
<circle cx="951.8" cy="773.2" r="3" fill="#000090"/>
<circle cx="945.3" cy="772.8" r="3" fill="#000090"/>
<circle cx="945.6" cy="775.8" r="3" fill="#000090"/>
<circle cx="938.2" cy="775.6" r="3" fill="#000090"/>
<circle cx="938.8" cy="774.2" r="3" fill="#000090"/>
<circle cx="932.0" cy="773.2" r="3" fill="#000090"/>
<circle cx="927.2" cy="769.9" r="3" fill="#000090"/>
<circle cx="927.8" cy="772.6" r="3" fill="#000090"/>
<circle cx="922.0" cy="773.4" r="3" fill="#000090"/>
<circle cx="917.9" cy="772.6" r="3" fill="#000090"/>
<circle cx="916.2" cy="768.7" r="3" fill="#000090"/>
<circle cx="909.7" cy="768.6" r="3" fill="#000090"/>
<circle cx="906.0" cy="769.5" r="3" fill="#000090"/>
<circle cx="902.4" cy="768.1" r="3" fill="#000090"/>
<circle cx="898.2" cy="770.1" r="3" fill="#000090"/>
<circle cx="895.5" cy="767.8" r="3" fill="#000090"/>
<circle cx="892.9" cy="770.0" r="3" fill="#000090"/>
<circle cx="888.3" cy="770.1" r="3" fill="#000090"/>
<circle cx="884.9" cy="768.2" r="3" fill="#000090"/>
<circle cx="881.2" cy="765.6" r="3" fill="#000090"/>
<circle cx="877.0" cy="766.4" r="3" fill="#000090"/>
<circle cx="871.1" cy="769.5" r="3" fill="#000090"/>
<circle cx="868.1" cy="767.9" r="3" fill="#000090"/>
<circle cx="867.1" cy="768.3" r="3" fill="#000090"/>
<circle cx="861.5" cy="768.5" r="3" fill="#000090"/>
<circle cx="859.1" cy="770.2" r="3" fill="#000090"/>
<circle cx="853.2" cy="769.5" r="3" fill="#000090"/>
<circle cx="850.3" cy="768.5" r="3" fill="#000090"/>
<circle cx="849.4" cy="770.0" r="3" fill="#000090"/>
<circle cx="844.7" cy="771.7" r="3" fill="#000090"/>
<circle cx="842.9" cy="770.5" r="3" fill="#000090"/>
<circle cx="837.8" cy="771.2" r="3" fill="#000090"/>
<circle cx="833.7" cy="772.6" r="3" fill="#000090"/>
<circle cx="829.8" cy="772.2" r="3" fill="#000090"/>
<circle cx="826.1" cy="775.0" r="3" fill="#000090"/>
<circle cx="823.5" cy="775.4" r="3" fill="#000090"/>
<circle cx="821.0" cy="773.0" r="3" fill="#000090"/>
<circle cx="815.3" cy="777.2" r="3" fill="#000090"/>
<circle cx="812.9" cy="773.9" r="3" fill="#000090"/>
<circle cx="805.6" cy="776.2" r="3" fill="#000090"/>
<circle cx="801.6" cy="776.0" r="3" fill="#000090"/>
<circle cx="797.9" cy="778.8" r="3" fill="#000090"/>
<circle cx="797.8" cy="781.3" r="3" fill="#000090"/>
<circle cx="790.9" cy="781.7" r="3" fill="#000090"/>
<circle cx="789.8" cy="780.2" r="3" fill="#000090"/>
<circle cx="787.2" cy="785.7" r="3" fill="#000090"/>
<circle cx="780.3" cy="786.9" r="3" fill="#000090"/>
<circle cx="777.5" cy="785.9" r="3" fill="#000090"/>
<circle cx="778.3" cy="790.8" r="3" fill="#000090"/>
<circle cx="772.0" cy="792.0" r="3" fill="#000090"/>
<circle cx="771.6" cy="794.7" r="3" fill="#000090"/>
<circle cx="767.8" cy="797.8" r="3" fill="#000090"/>
<circle cx="768.3" cy="799.4" r="3" fill="#000090"/>
<circle cx="765.3" cy="804.7" r="3" fill="#000090"/>
<circle cx="762.0" cy="807.7" r="3" fill="#000090"/>
<circle cx="764.5" cy="812.2" r="3" fill="#000090"/>
<circle cx="761.1" cy="818.1" r="3" fill="#000090"/>
<circle cx="764.2" cy="821.6" r="3" fill="#000090"/>
<circle cx="760.2" cy="821.7" r="3" fill="#000090"/>
<circle cx="759.3" cy="827.8" r="3" fill="#000090"/>
<circle cx="759.9" cy="828.1" r="3" fill="#000090"/>
<circle cx="757.6" cy="832.7" r="3" fill="#000090"/>
<circle cx="756.6" cy="830.1" r="3" fill="#000090"/>
<circle cx="750.2" cy="834.1" r="3" fill="#000090"/>
<circle cx="750.7" cy="829.5" r="3" fill="#000090"/>
<circle cx="746.5" cy="822.8" r="3" fill="#000090"/>
<circle cx="747.8" cy="821.1" r="3" fill="#000090"/>
<circle cx="743.1" cy="820.2" r="3" fill="#000090"/>
<circle cx="744.2" cy="816.0" r="3" fill="#000090"/>
<circle cx="739.7" cy="812.8" r="3" fill="#000090"/>
<circle cx="737.9" cy="809.3" r="3" fill="#000090"/>
<circle cx="738.2" cy="803.2" r="3" fill="#000090"/>
<circle cx="737.0" cy="802.6" r="3" fill="#000090"/>
<circle cx="733.8" cy="795.1" r="3" fill="#000090"/>
<circle cx="733.2" cy="792.5" r="3" fill="#000090"/>
<circle cx="729.2" cy="788.9" r="3" fill="#000090"/>
<circle cx="727.1" cy="785.9" r="3" fill="#000090"/>
<circle cx="726.5" cy="783.2" r="3" fill="#000090"/>
<circle cx="726.8" cy="779.9" r="3" fill="#000090"/>
<circle cx="723.6" cy="776.2" r="3" fill="#000090"/>
<circle cx="720.9" cy="772.2" r="3" fill="#000090"/>
<circle cx="718.6" cy="769.0" r="3" fill="#000090"/>
<circle cx="719.1" cy="768.5" r="3" fill="#000090"/>
<circle cx="714.4" cy="764.9" r="3" fill="#000090"/>
<circle cx="716.4" cy="759.7" r="3" fill="#000090"/>
<circle cx="714.0" cy="758.0" r="3" fill="#000090"/>
<circle cx="710.6" cy="756.7" r="3" fill="#000090"/>
<circle cx="708.4" cy="751.7" r="3" fill="#000090"/>
<circle cx="708.0" cy="750.7" r="3" fill="#000090"/>
<circle cx="704.5" cy="746.7" r="3" fill="#000090"/>
<circle cx="704.6" cy="742.3" r="3" fill="#000090"/>
<circle cx="701.3" cy="737.6" r="3" fill="#000090"/>
<circle cx="697.8" cy="733.1" r="3" fill="#000090"/>
<circle cx="696.3" cy="732.7" r="3" fill="#000090"/>
<circle cx="695.7" cy="726.2" r="3" fill="#000090"/>
<circle cx="693.3" cy="726.1" r="3" fill="#000090"/>
<circle cx="695.7" cy="721.7" r="3" fill="#000090"/>
<circle cx="691.2" cy="716.0" r="3" fill="#000090"/>
<circle cx="689.7" cy="713.5" r="3" fill="#000090"/>
<circle cx="687.5" cy="709.9" r="3" fill="#000090"/>
<circle cx="686.5" cy="708.9" r="3" fill="#000090"/>
<circle cx="688.5" cy="703.3" r="3" fill="#000090"/>
<circle cx="683.3" cy="701.9" r="3" fill="#000090"/>
<circle cx="682.0" cy="695.3" r="3" fill="#000090"/>
<circle cx="679.1" cy="691.8" r="3" fill="#000090"/>
<circle cx="680.0" cy="688.9" r="3" fill="#000090"/>
<circle cx="677.2" cy="685.3" r="3" fill="#000090"/>
<circle cx="674.8" cy="680.5" r="3" fill="#000090"/>
<circle cx="673.8" cy="677.6" r="3" fill="#000090"/>
<circle cx="672.1" cy="672.2" r="3" fill="#000090"/>
<circle cx="672.0" cy="669.7" r="3" fill="#000090"/>
<circle cx="671.8" cy="668.0" r="3" fill="#000090"/>
<circle cx="671.0" cy="665.5" r="3" fill="#000090"/>
<circle cx="669.2" cy="663.5" r="3" fill="#000090"/>
<circle cx="665.9" cy="657.6" r="3" fill="#000090"/>
<circle cx="667.3" cy="653.6" r="3" fill="#000090"/>
<circle cx="664.4" cy="653.0" r="3" fill="#000090"/>
<circle cx="659.3" cy="650.8" r="3" fill="#000090"/>
<circle cx="662.0" cy="646.6" r="3" fill="#000090"/>
<circle cx="659.2" cy="644.6" r="3" fill="#000090"/>
<circle cx="654.2" cy="640.1" r="3" fill="#000090"/>
<circle cx="654.0" cy="638.7" r="3" fill="#000090"/>
<circle cx="653.5" cy="635.6" r="3" fill="#000090"/>
<circle cx="650.4" cy="633.0" r="3" fill="#000090"/>
<circle cx="648.9" cy="629.0" r="3" fill="#000090"/>
<circle cx="644.6" cy="622.4" r="3" fill="#000090"/>
<circle cx="642.2" cy="620.8" r="3" fill="#000090"/>
<circle cx="640.0" cy="619.9" r="3" fill="#000090"/>
<circle cx="640.3" cy="615.6" r="3" fill="#000090"/>
<circle cx="639.4" cy="612.7" r="3" fill="#000090"/>
<circle cx="637.4" cy="606.0" r="3" fill="#000090"/>
<circle cx="637.7" cy="606.5" r="3" fill="#000090"/>
<circle cx="635.0" cy="602.2" r="3" fill="#000090"/>
<circle cx="635.5" cy="596.5" r="3" fill="#000090"/>
<circle cx="635.5" cy="594.1" r="3" fill="#000090"/>
<circle cx="875.6" cy="775.0" r="3" fill="#000090"/>
<circle cx="961.4" cy="799.2" r="3" fill="#000090"/>
<circle cx="929.7" cy="779.0" r="3" fill="#000090"/>
<circle cx="927.8" cy="789.2" r="3" fill="#000090"/>
<circle cx="964.9" cy="787.0" r="3" fill="#000090"/>
<circle cx="885.0" cy="774.6" r="3" fill="#000090"/>
<circle cx="961.9" cy="776.4" r="3" fill="#000090"/>
<circle cx="873.8" cy="775.1" r="3" fill="#000090"/>
<circle cx="952.7" cy="789.5" r="3" fill="#000090"/>
<circle cx="953.2" cy="775.9" r="3" fill="#000090"/>
<circle cx="932.6" cy="781.8" r="3" fill="#000090"/>
<circle cx="868.3" cy="781.6" r="3" fill="#000090"/>
<circle cx="971.8" cy="798.9" r="3" fill="#000090"/>
<circle cx="924.0" cy="775.1" r="3" fill="#000090"/>
<circle cx="893.1" cy="798.1" r="3" fill="#000090"/>
<circle cx="893.2" cy="785.8" r="3" fill="#000090"/>
<circle cx="884.3" cy="783.8" r="3" fill="#000090"/>
<circle cx="971.8" cy="783.3" r="3" fill="#000090"/>
<circle cx="980.4" cy="789.9" r="3" fill="#000090"/>
<circle cx="895.8" cy="796.5" r="3" fill="#000090"/>
<circle cx="866.5" cy="782.7" r="3" fill="#000090"/>
<circle cx="924.1" cy="776.3" r="3" fill="#000090"/>
<circle cx="884.2" cy="777.7" r="3" fill="#000090"/>
<circle cx="906.8" cy="794.6" r="3" fill="#000090"/>
<circle cx="866.2" cy="791.5" r="3" fill="#000090"/>
<circle cx="985.5" cy="790.2" r="3" fill="#000090"/>
<circle cx="914.0" cy="779.4" r="3" fill="#000090"/>
<circle cx="912.5" cy="780.6" r="3" fill="#000090"/>
<circle cx="879.1" cy="794.4" r="3" fill="#000090"/>
<circle cx="902.8" cy="797.8" r="3" fill="#000090"/>
<circle cx="898.2" cy="775.0" r="3" fill="#000090"/>
<circle cx="931.9" cy="772.5" r="3" fill="#000090"/>
<circle cx="914.2" cy="798.5" r="3" fill="#000090"/>
<circle cx="980.1" cy="793.6" r="3" fill="#000090"/>
<circle cx="947.4" cy="797.1" r="3" fill="#000090"/>
<circle cx="960.5" cy="781.3" r="3" fill="#000090"/>
<circle cx="963.1" cy="787.9" r="3" fill="#000090"/>
<circle cx="926.9" cy="777.7" r="3" fill="#000090"/>
<circle cx="904.4" cy="791.1" r="3" fill="#000090"/>
<circle cx="950.6" cy="776.2" r="3" fill="#000090"/>
<circle cx="937.9" cy="779.4" r="3" fill="#000090"/>
<circle cx="887.6" cy="771.5" r="3" fill="#000090"/>
<circle cx="892.8" cy="796.8" r="3" fill="#000090"/>
<circle cx="930.1" cy="773.5" r="3" fill="#000090"/>
<circle cx="924.0" cy="770.7" r="3" fill="#000090"/>
<circle cx="890.8" cy="769.1" r="3" fill="#000090"/>
<circle cx="896.8" cy="774.8" r="3" fill="#000090"/>
<circle cx="939.5" cy="796.2" r="3" fill="#000090"/>
<circle cx="962.7" cy="780.0" r="3" fill="#000090"/>
<circle cx="919.4" cy="783.8" r="3" fill="#000090"/>
<circle cx="914.6" cy="777.5" r="3" fill="#000090"/>
<circle cx="874.0" cy="775.4" r="3" fill="#000090"/>
<circle cx="930.9" cy="787.4" r="3" fill="#000090"/>
<circle cx="901.0" cy="774.4" r="3" fill="#000090"/>
<circle cx="917.6" cy="781.2" r="3" fill="#000090"/>
<circle cx="870.2" cy="790.1" r="3" fill="#000090"/>
<circle cx="916.5" cy="797.5" r="3" fill="#000090"/>
<circle cx="972.5" cy="795.1" r="3" fill="#000090"/>
<circle cx="880.1" cy="771.2" r="3" fill="#000090"/>
<circle cx="933.4" cy="789.2" r="3" fill="#000090"/>
<circle cx="987.5" cy="790.5" r="3" fill="#000090"/>
<circle cx="949.5" cy="792.0" r="3" fill="#000090"/>
<circle cx="925.0" cy="784.8" r="3" fill="#000090"/>
<circle cx="871.1" cy="792.6" r="3" fill="#000090"/>
<circle cx="896.0" cy="797.3" r="3" fill="#000090"/>
<circle cx="949.3" cy="776.3" r="3" fill="#000090"/>
<circle cx="882.5" cy="774.6" r="3" fill="#000090"/>
<circle cx="948.1" cy="789.8" r="3" fill="#000090"/>
<circle cx="880.5" cy="768.4" r="3" fill="#000090"/>
<circle cx="933.7" cy="785.8" r="3" fill="#000090"/>
<circle cx="799.9" cy="782.3" r="3" fill="#000090"/>
<circle cx="790.6" cy="797.5" r="3" fill="#000090"/>
<circle cx="783.4" cy="783.8" r="3" fill="#000090"/>
<circle cx="811.8" cy="811.2" r="3" fill="#000090"/>
<circle cx="803.4" cy="784.5" r="3" fill="#000090"/>
<circle cx="794.5" cy="794.9" r="3" fill="#000090"/>
<circle cx="831.7" cy="780.7" r="3" fill="#000090"/>
<circle cx="812.5" cy="781.1" r="3" fill="#000090"/>
<circle cx="862.7" cy="787.9" r="3" fill="#000090"/>
<circle cx="846.6" cy="782.8" r="3" fill="#000090"/>
<circle cx="781.9" cy="816.7" r="3" fill="#000090"/>
<circle cx="789.9" cy="828.9" r="3" fill="#000090"/>
<circle cx="811.5" cy="780.0" r="3" fill="#000090"/>
<circle cx="782.1" cy="794.7" r="3" fill="#000090"/>
<circle cx="773.8" cy="793.2" r="3" fill="#000090"/>
<circle cx="781.0" cy="830.3" r="3" fill="#000090"/>
<circle cx="764.5" cy="793.2" r="3" fill="#000090"/>
<circle cx="858.6" cy="789.1" r="3" fill="#000090"/>
<circle cx="778.0" cy="827.9" r="3" fill="#000090"/>
<circle cx="829.8" cy="792.2" r="3" fill="#000090"/>
<circle cx="798.4" cy="789.2" r="3" fill="#000090"/>
<circle cx="788.2" cy="790.5" r="3" fill="#000090"/>
<circle cx="861.2" cy="775.9" r="3" fill="#000090"/>
<circle cx="862.1" cy="781.3" r="3" fill="#000090"/>
<circle cx="796.5" cy="820.6" r="3" fill="#000090"/>
<circle cx="846.8" cy="795.7" r="3" fill="#000090"/>
<circle cx="763.3" cy="798.3" r="3" fill="#000090"/>
<circle cx="798.3" cy="826.8" r="3" fill="#000090"/>
<circle cx="778.8" cy="791.3" r="3" fill="#000090"/>
<circle cx="854.9" cy="769.9" r="3" fill="#000090"/>
<circle cx="802.4" cy="820.0" r="3" fill="#000090"/>
<circle cx="857.4" cy="784.4" r="3" fill="#000090"/>
<circle cx="794.6" cy="785.4" r="3" fill="#000090"/>
<circle cx="786.3" cy="813.9" r="3" fill="#000090"/>
<circle cx="792.2" cy="785.6" r="3" fill="#000090"/>
<circle cx="859.9" cy="769.6" r="3" fill="#000090"/>
<circle cx="783.3" cy="798.4" r="3" fill="#000090"/>
<circle cx="799.7" cy="784.1" r="3" fill="#000090"/>
<circle cx="804.4" cy="799.6" r="3" fill="#000090"/>
<circle cx="858.2" cy="779.7" r="3" fill="#000090"/>
<circle cx="823.6" cy="789.0" r="3" fill="#000090"/>
<circle cx="792.5" cy="791.2" r="3" fill="#000090"/>
<circle cx="842.5" cy="773.1" r="3" fill="#000090"/>
<circle cx="779.3" cy="816.2" r="3" fill="#000090"/>
<circle cx="761.7" cy="803.4" r="3" fill="#000090"/>
<circle cx="768.4" cy="799.9" r="3" fill="#000090"/>
<circle cx="834.7" cy="796.6" r="3" fill="#000090"/>
<circle cx="783.3" cy="794.7" r="3" fill="#000090"/>
<circle cx="825.0" cy="811.1" r="3" fill="#000090"/>
<circle cx="829.8" cy="775.8" r="3" fill="#000090"/>
<circle cx="848.8" cy="786.8" r="3" fill="#000090"/>
<circle cx="819.2" cy="791.9" r="3" fill="#000090"/>
<circle cx="837.7" cy="780.7" r="3" fill="#000090"/>
<circle cx="784.7" cy="783.7" r="3" fill="#000090"/>
<circle cx="774.6" cy="824.6" r="3" fill="#000090"/>
<circle cx="820.5" cy="788.9" r="3" fill="#000090"/>
<circle cx="812.8" cy="782.8" r="3" fill="#000090"/>
<circle cx="865.0" cy="774.5" r="3" fill="#000090"/>
<circle cx="809.3" cy="820.4" r="3" fill="#000090"/>
<circle cx="858.5" cy="791.8" r="3" fill="#000090"/>
<circle cx="851.5" cy="796.7" r="3" fill="#000090"/>
<circle cx="786.1" cy="817.8" r="3" fill="#000090"/>
<circle cx="860.1" cy="774.8" r="3" fill="#000090"/>
<circle cx="822.4" cy="807.7" r="3" fill="#000090"/>
<circle cx="781.5" cy="791.6" r="3" fill="#000090"/>
<circle cx="785.5" cy="806.4" r="3" fill="#000090"/>
<circle cx="828.4" cy="781.0" r="3" fill="#000090"/>
<circle cx="831.3" cy="779.8" r="3" fill="#000090"/>
<circle cx="791.7" cy="781.0" r="3" fill="#000090"/>
<circle cx="800.7" cy="803.2" r="3" fill="#000090"/>
<circle cx="760.3" cy="841.3" r="3" fill="#000090"/>
<circle cx="774.4" cy="842.2" r="3" fill="#000090"/>
<circle cx="781.3" cy="847.3" r="3" fill="#000090"/>
<circle cx="788.4" cy="861.5" r="3" fill="#000090"/>
<circle cx="796.3" cy="880.3" r="3" fill="#000090"/>
<circle cx="796.3" cy="851.6" r="3" fill="#000090"/>
<circle cx="787.5" cy="841.3" r="3" fill="#000090"/>
<circle cx="793.5" cy="840.3" r="3" fill="#000090"/>
<circle cx="806.3" cy="837.5" r="3" fill="#000090"/>
<circle cx="803.4" cy="846.5" r="3" fill="#000090"/>
<circle cx="814.3" cy="848.4" r="3" fill="#000090"/>
<circle cx="796.5" cy="844.0" r="3" fill="#000090"/>
<circle cx="776.3" cy="832.3" r="3" fill="#000090"/>
<circle cx="787.1" cy="834.1" r="3" fill="#000090"/>
<circle cx="793.1" cy="831.5" r="3" fill="#000090"/>
<circle cx="794.4" cy="826.3" r="3" fill="#000090"/>
<circle cx="765.9" cy="824.4" r="3" fill="#000090"/>
<circle cx="771.0" cy="822.1" r="3" fill="#000090"/>
<circle cx="778.1" cy="820.3" r="3" fill="#000090"/>
<circle cx="786.0" cy="819.1" r="3" fill="#000090"/>
<circle cx="803.4" cy="824.4" r="3" fill="#000090"/>
<circle cx="811.5" cy="817.3" r="3" fill="#000090"/>
<circle cx="806.3" cy="811.3" r="3" fill="#000090"/>
<circle cx="796.3" cy="812.2" r="3" fill="#000090"/>
<circle cx="829.3" cy="806.2" r="3" fill="#000090"/>
<circle cx="813.8" cy="804.7" r="3" fill="#000090"/>
<circle cx="776.3" cy="804.7" r="3" fill="#000090"/>
<circle cx="765.9" cy="810.3" r="3" fill="#000090"/>
<circle cx="755.6" cy="814.1" r="3" fill="#000090"/>
<circle cx="748.1" cy="820.6" r="3" fill="#000090"/>
<circle cx="753.8" cy="829.1" r="3" fill="#000090"/>
<circle cx="803.4" cy="798.1" r="3" fill="#000090"/>
<circle cx="770.6" cy="798.1" r="3" fill="#000090"/>
<circle cx="787.5" cy="795.3" r="3" fill="#000090"/>
<circle cx="885.4" cy="798.1" r="3" fill="#000090"/>
<circle cx="886.5" cy="790.3" r="3" fill="#000090"/>
<circle cx="879.4" cy="787.8" r="3" fill="#000090"/>
<circle cx="931.9" cy="796.3" r="3" fill="#000090"/>
<circle cx="937.5" cy="786.0" r="3" fill="#000090"/>
<circle cx="919.7" cy="790.3" r="3" fill="#000090"/>
<circle cx="914.1" cy="787.8" r="3" fill="#000090"/>
<circle cx="903.8" cy="786.0" r="3" fill="#000090"/>
<circle cx="962.8" cy="797.2" r="3" fill="#000090"/>
<circle cx="968.5" cy="799.6" r="3" fill="#000090"/>
<circle cx="975.0" cy="798.5" r="3" fill="#000090"/>
<circle cx="973.1" cy="791.6" r="3" fill="#000090"/>
<circle cx="963.8" cy="789.7" r="3" fill="#000090"/>
<circle cx="983.4" cy="788.4" r="3" fill="#000090"/>
<circle cx="966.6" cy="779.4" r="3" fill="#000090"/>
<circle cx="948.8" cy="780.3" r="3" fill="#000090"/>
<circle cx="997.5" cy="805.3" r="3" fill="#000090"/>
<circle cx="1002.2" cy="812.2" r="3" fill="#000090"/>
<circle cx="1005.6" cy="809.4" r="3" fill="#000090"/>
<circle cx="1031.3" cy="813.1" r="3" fill="#000090"/>
<circle cx="1029.4" cy="827.2" r="3" fill="#000090"/>
<circle cx="1017.2" cy="830.4" r="3" fill="#000090"/>
<circle cx="1022.3" cy="833.2" r="3" fill="#000090"/>
<circle cx="650.3" cy="585.4" r="3" fill="#000090"/>
<circle cx="658.5" cy="583.2" r="3" fill="#000090"/>
<circle cx="673.6" cy="587.6" r="3" fill="#000090"/>
<circle cx="688.0" cy="602.7" r="3" fill="#000090"/>
<circle cx="700.7" cy="604.0" r="3" fill="#000090"/>
<circle cx="728.4" cy="622.9" r="3" fill="#000090"/>
<circle cx="654.0" cy="649.3" r="3" fill="#000090"/>
<circle cx="662.0" cy="600.0" r="3" fill="#000090"/>
<circle cx="640.0" cy="590.0" r="3" fill="#000090"/>
<ellipse cx="748" cy="753" rx="50" ry="20" fill="url(#glowA)" transform="rotate(12 748 753)"/>
<ellipse cx="840" cy="738" rx="60" ry="22" fill="url(#glowB)" transform="rotate(28 840 738)"/>
<ellipse cx="930" cy="755" rx="45" ry="14" fill="url(#glowB)" transform="rotate(30 930 755)"/>
<g transform="rotate(33 900.7 738.5)"><ellipse cx="900.7" cy="738.5" rx="19" ry="9.5" fill="#0040f0"/><ellipse cx="900.7" cy="738.5" rx="15.5" ry="7.2" fill="#08c0f8"/><ellipse cx="899.5" cy="737.8" rx="8" ry="3.5" fill="#70f0a0" transform="translate(1 -2)"/><ellipse cx="900.7" cy="738.5" rx="11" ry="4.4" fill="#f0e020"/><ellipse cx="900.7" cy="738.5" rx="9" ry="3.4" fill="#f08010"/><ellipse cx="900.2" cy="738.5" rx="5" ry="2.3" fill="#e80010"/></g>
<circle cx="767.3" cy="726.0" r="4.7" fill="#a8a85c" stroke="#20200a" stroke-width="1"/>
<circle cx="767.3" cy="726.0" r="3.6" fill="none" stroke="#d8d820" stroke-width="0.8"/>
<circle cx="780.7" cy="730.3" r="4.7" fill="#a8a85c" stroke="#20200a" stroke-width="1"/>
<circle cx="780.7" cy="730.3" r="3.6" fill="none" stroke="#d8d820" stroke-width="0.8"/>
<circle cx="777.8" cy="733.5" r="4.7" fill="#a8a85c" stroke="#20200a" stroke-width="1"/>
<circle cx="777.8" cy="733.5" r="3.6" fill="none" stroke="#d8d820" stroke-width="0.8"/>
<circle cx="775.4" cy="735.7" r="4.7" fill="#a8a85c" stroke="#20200a" stroke-width="1"/>
<circle cx="775.4" cy="735.7" r="3.6" fill="none" stroke="#d8d820" stroke-width="0.8"/>
<circle cx="784.5" cy="734.2" r="4.7" fill="#a8a85c" stroke="#20200a" stroke-width="1"/>
<circle cx="784.5" cy="734.2" r="3.6" fill="none" stroke="#d8d820" stroke-width="0.8"/>
<circle cx="780.8" cy="736.0" r="4.7" fill="#a8a85c" stroke="#20200a" stroke-width="1"/>
<circle cx="780.8" cy="736.0" r="3.6" fill="none" stroke="#d8d820" stroke-width="0.8"/>
<circle cx="777.9" cy="740.2" r="4.7" fill="#a8a85c" stroke="#20200a" stroke-width="1"/>
<circle cx="777.9" cy="740.2" r="3.6" fill="none" stroke="#d8d820" stroke-width="0.8"/>
<circle cx="787.9" cy="737.6" r="4.7" fill="#a8a85c" stroke="#20200a" stroke-width="1"/>
<circle cx="787.9" cy="737.6" r="3.6" fill="none" stroke="#d8d820" stroke-width="0.8"/>
<circle cx="784.6" cy="740.4" r="4.7" fill="#a8a85c" stroke="#20200a" stroke-width="1"/>
<circle cx="784.6" cy="740.4" r="3.6" fill="none" stroke="#d8d820" stroke-width="0.8"/>
<circle cx="780.7" cy="742.8" r="4.7" fill="#a8a85c" stroke="#20200a" stroke-width="1"/>
<circle cx="780.7" cy="742.8" r="3.6" fill="none" stroke="#d8d820" stroke-width="0.8"/>
<circle cx="789.9" cy="741.0" r="4.7" fill="#a8a85c" stroke="#20200a" stroke-width="1"/>
<circle cx="789.9" cy="741.0" r="3.6" fill="none" stroke="#d8d820" stroke-width="0.8"/>
<circle cx="786.0" cy="743.4" r="4.7" fill="#a8a85c" stroke="#20200a" stroke-width="1"/>
<circle cx="786.0" cy="743.4" r="3.6" fill="none" stroke="#d8d820" stroke-width="0.8"/>
<circle cx="783.9" cy="746.9" r="4.7" fill="#a8a85c" stroke="#20200a" stroke-width="1"/>
<circle cx="783.9" cy="746.9" r="3.6" fill="none" stroke="#d8d820" stroke-width="0.8"/>
<circle cx="793.5" cy="743.8" r="4.7" fill="#a8a85c" stroke="#20200a" stroke-width="1"/>
<circle cx="793.5" cy="743.8" r="3.6" fill="none" stroke="#d8d820" stroke-width="0.8"/>
<circle cx="789.6" cy="747.0" r="4.7" fill="#a8a85c" stroke="#20200a" stroke-width="1"/>
<circle cx="789.6" cy="747.0" r="3.6" fill="none" stroke="#d8d820" stroke-width="0.8"/>
<circle cx="786.5" cy="749.8" r="4.7" fill="#a8a85c" stroke="#20200a" stroke-width="1"/>
<circle cx="786.5" cy="749.8" r="3.6" fill="none" stroke="#d8d820" stroke-width="0.8"/>
<circle cx="796.5" cy="748.7" r="4.7" fill="#a8a85c" stroke="#20200a" stroke-width="1"/>
<circle cx="796.5" cy="748.7" r="3.6" fill="none" stroke="#d8d820" stroke-width="0.8"/>
<circle cx="792.0" cy="751.0" r="4.7" fill="#a8a85c" stroke="#20200a" stroke-width="1"/>
<circle cx="792.0" cy="751.0" r="3.6" fill="none" stroke="#d8d820" stroke-width="0.8"/>
<circle cx="789.8" cy="753.3" r="4.7" fill="#a8a85c" stroke="#20200a" stroke-width="1"/>
<circle cx="789.8" cy="753.3" r="3.6" fill="none" stroke="#d8d820" stroke-width="0.8"/>
<circle cx="799.0" cy="752.3" r="4.7" fill="#a8a85c" stroke="#20200a" stroke-width="1"/>
<circle cx="799.0" cy="752.3" r="3.6" fill="none" stroke="#d8d820" stroke-width="0.8"/>
<circle cx="794.7" cy="754.3" r="4.7" fill="#a8a85c" stroke="#20200a" stroke-width="1"/>
<circle cx="794.7" cy="754.3" r="3.6" fill="none" stroke="#d8d820" stroke-width="0.8"/>
<circle cx="791.5" cy="757.6" r="4.7" fill="#a8a85c" stroke="#20200a" stroke-width="1"/>
<circle cx="791.5" cy="757.6" r="3.6" fill="none" stroke="#d8d820" stroke-width="0.8"/>
<circle cx="802.9" cy="754.9" r="4.7" fill="#a8a85c" stroke="#20200a" stroke-width="1"/>
<circle cx="802.9" cy="754.9" r="3.6" fill="none" stroke="#d8d820" stroke-width="0.8"/>
<circle cx="797.7" cy="757.9" r="4.7" fill="#a8a85c" stroke="#20200a" stroke-width="1"/>
<circle cx="797.7" cy="757.9" r="3.6" fill="none" stroke="#d8d820" stroke-width="0.8"/>
<circle cx="795.2" cy="761.0" r="4.7" fill="#a8a85c" stroke="#20200a" stroke-width="1"/>
<circle cx="795.2" cy="761.0" r="3.6" fill="none" stroke="#d8d820" stroke-width="0.8"/>
<circle cx="805.0" cy="758.7" r="4.7" fill="#a8a85c" stroke="#20200a" stroke-width="1"/>
<circle cx="805.0" cy="758.7" r="3.6" fill="none" stroke="#d8d820" stroke-width="0.8"/>
<circle cx="802.1" cy="761.3" r="4.7" fill="#a8a85c" stroke="#20200a" stroke-width="1"/>
<circle cx="802.1" cy="761.3" r="3.6" fill="none" stroke="#d8d820" stroke-width="0.8"/>
<circle cx="797.8" cy="765.0" r="4.7" fill="#a8a85c" stroke="#20200a" stroke-width="1"/>
<circle cx="797.8" cy="765.0" r="3.6" fill="none" stroke="#d8d820" stroke-width="0.8"/>
<circle cx="807.3" cy="762.3" r="4.7" fill="#a8a85c" stroke="#20200a" stroke-width="1"/>
<circle cx="807.3" cy="762.3" r="3.6" fill="none" stroke="#d8d820" stroke-width="0.8"/>
<circle cx="804.2" cy="765.3" r="4.7" fill="#a8a85c" stroke="#20200a" stroke-width="1"/>
<circle cx="804.2" cy="765.3" r="3.6" fill="none" stroke="#d8d820" stroke-width="0.8"/>
<circle cx="800.2" cy="768.6" r="4.7" fill="#a8a85c" stroke="#20200a" stroke-width="1"/>
<circle cx="800.2" cy="768.6" r="3.6" fill="none" stroke="#d8d820" stroke-width="0.8"/>
<circle cx="810.5" cy="764.6" r="4.7" fill="#a8a85c" stroke="#20200a" stroke-width="1"/>
<circle cx="810.5" cy="764.6" r="3.6" fill="none" stroke="#d8d820" stroke-width="0.8"/>
<circle cx="806.9" cy="768.1" r="4.7" fill="#a8a85c" stroke="#20200a" stroke-width="1"/>
<circle cx="806.9" cy="768.1" r="3.6" fill="none" stroke="#d8d820" stroke-width="0.8"/>
<circle cx="802.9" cy="771.0" r="4.7" fill="#a8a85c" stroke="#20200a" stroke-width="1"/>
<circle cx="802.9" cy="771.0" r="3.6" fill="none" stroke="#d8d820" stroke-width="0.8"/>
<circle cx="813.6" cy="769.4" r="4.7" fill="#a8a85c" stroke="#20200a" stroke-width="1"/>
<circle cx="813.6" cy="769.4" r="3.6" fill="none" stroke="#d8d820" stroke-width="0.8"/>
<circle cx="810.0" cy="771.4" r="4.7" fill="#a8a85c" stroke="#20200a" stroke-width="1"/>
<circle cx="810.0" cy="771.4" r="3.6" fill="none" stroke="#d8d820" stroke-width="0.8"/>
<circle cx="806.3" cy="775.2" r="4.7" fill="#a8a85c" stroke="#20200a" stroke-width="1"/>
<circle cx="806.3" cy="775.2" r="3.6" fill="none" stroke="#d8d820" stroke-width="0.8"/>
<circle cx="817.5" cy="772.6" r="4.7" fill="#a8a85c" stroke="#20200a" stroke-width="1"/>
<circle cx="817.5" cy="772.6" r="3.6" fill="none" stroke="#d8d820" stroke-width="0.8"/>
<circle cx="812.6" cy="776.0" r="4.7" fill="#a8a85c" stroke="#20200a" stroke-width="1"/>
<circle cx="812.6" cy="776.0" r="3.6" fill="none" stroke="#d8d820" stroke-width="0.8"/>
<circle cx="809.5" cy="777.7" r="4.7" fill="#a8a85c" stroke="#20200a" stroke-width="1"/>
<circle cx="809.5" cy="777.7" r="3.6" fill="none" stroke="#d8d820" stroke-width="0.8"/>
<circle cx="818.9" cy="776.6" r="4.7" fill="#a8a85c" stroke="#20200a" stroke-width="1"/>
<circle cx="818.9" cy="776.6" r="3.6" fill="none" stroke="#d8d820" stroke-width="0.8"/>
<circle cx="816.8" cy="779.2" r="4.7" fill="#a8a85c" stroke="#20200a" stroke-width="1"/>
<circle cx="816.8" cy="779.2" r="3.6" fill="none" stroke="#d8d820" stroke-width="0.8"/>
<circle cx="812.6" cy="781.9" r="4.7" fill="#a8a85c" stroke="#20200a" stroke-width="1"/>
<circle cx="812.6" cy="781.9" r="3.6" fill="none" stroke="#d8d820" stroke-width="0.8"/>
<circle cx="822.0" cy="780.5" r="4.7" fill="#a8a85c" stroke="#20200a" stroke-width="1"/>
<circle cx="822.0" cy="780.5" r="3.6" fill="none" stroke="#d8d820" stroke-width="0.8"/>
<circle cx="818.8" cy="782.7" r="4.7" fill="#a8a85c" stroke="#20200a" stroke-width="1"/>
<circle cx="818.8" cy="782.7" r="3.6" fill="none" stroke="#d8d820" stroke-width="0.8"/>
<circle cx="816.2" cy="786.0" r="4.7" fill="#a8a85c" stroke="#20200a" stroke-width="1"/>
<circle cx="816.2" cy="786.0" r="3.6" fill="none" stroke="#d8d820" stroke-width="0.8"/>
<circle cx="825.4" cy="782.7" r="4.7" fill="#a8a85c" stroke="#20200a" stroke-width="1"/>
<circle cx="825.4" cy="782.7" r="3.6" fill="none" stroke="#d8d820" stroke-width="0.8"/>
<circle cx="822.1" cy="785.3" r="4.7" fill="#a8a85c" stroke="#20200a" stroke-width="1"/>
<circle cx="822.1" cy="785.3" r="3.6" fill="none" stroke="#d8d820" stroke-width="0.8"/>
<circle cx="819.2" cy="788.6" r="4.7" fill="#a8a85c" stroke="#20200a" stroke-width="1"/>
<circle cx="819.2" cy="788.6" r="3.6" fill="none" stroke="#d8d820" stroke-width="0.8"/>
<circle cx="814.1" cy="720.8" r="4.7" fill="#a8a85c" stroke="#20200a" stroke-width="1"/>
<circle cx="814.1" cy="720.8" r="3.6" fill="none" stroke="#d8d820" stroke-width="0.8"/>
<circle cx="810.8" cy="724.0" r="4.7" fill="#a8a85c" stroke="#20200a" stroke-width="1"/>
<circle cx="810.8" cy="724.0" r="3.6" fill="none" stroke="#d8d820" stroke-width="0.8"/>
<circle cx="808.4" cy="727.1" r="4.7" fill="#a8a85c" stroke="#20200a" stroke-width="1"/>
<circle cx="808.4" cy="727.1" r="3.6" fill="none" stroke="#d8d820" stroke-width="0.8"/>
<circle cx="815.7" cy="724.2" r="4.7" fill="#a8a85c" stroke="#20200a" stroke-width="1"/>
<circle cx="815.7" cy="724.2" r="3.6" fill="none" stroke="#d8d820" stroke-width="0.8"/>
<circle cx="813.9" cy="726.5" r="4.7" fill="#a8a85c" stroke="#20200a" stroke-width="1"/>
<circle cx="813.9" cy="726.5" r="3.6" fill="none" stroke="#d8d820" stroke-width="0.8"/>
<circle cx="811.5" cy="730.1" r="4.7" fill="#a8a85c" stroke="#20200a" stroke-width="1"/>
<circle cx="811.5" cy="730.1" r="3.6" fill="none" stroke="#d8d820" stroke-width="0.8"/>
<circle cx="819.9" cy="726.5" r="4.7" fill="#a8a85c" stroke="#20200a" stroke-width="1"/>
<circle cx="819.9" cy="726.5" r="3.6" fill="none" stroke="#d8d820" stroke-width="0.8"/>
<circle cx="817.9" cy="729.2" r="4.7" fill="#a8a85c" stroke="#20200a" stroke-width="1"/>
<circle cx="817.9" cy="729.2" r="3.6" fill="none" stroke="#d8d820" stroke-width="0.8"/>
<circle cx="816.1" cy="733.4" r="4.7" fill="#a8a85c" stroke="#20200a" stroke-width="1"/>
<circle cx="816.1" cy="733.4" r="3.6" fill="none" stroke="#d8d820" stroke-width="0.8"/>
<circle cx="822.4" cy="729.4" r="4.7" fill="#a8a85c" stroke="#20200a" stroke-width="1"/>
<circle cx="822.4" cy="729.4" r="3.6" fill="none" stroke="#d8d820" stroke-width="0.8"/>
<circle cx="821.7" cy="732.5" r="4.7" fill="#a8a85c" stroke="#20200a" stroke-width="1"/>
<circle cx="821.7" cy="732.5" r="3.6" fill="none" stroke="#d8d820" stroke-width="0.8"/>
<circle cx="817.8" cy="735.8" r="4.7" fill="#a8a85c" stroke="#20200a" stroke-width="1"/>
<circle cx="817.8" cy="735.8" r="3.6" fill="none" stroke="#d8d820" stroke-width="0.8"/>
<circle cx="826.9" cy="730.3" r="4.7" fill="#a8a85c" stroke="#20200a" stroke-width="1"/>
<circle cx="826.9" cy="730.3" r="3.6" fill="none" stroke="#d8d820" stroke-width="0.8"/>
<circle cx="823.3" cy="735.3" r="4.7" fill="#a8a85c" stroke="#20200a" stroke-width="1"/>
<circle cx="823.3" cy="735.3" r="3.6" fill="none" stroke="#d8d820" stroke-width="0.8"/>
<circle cx="822.1" cy="737.1" r="4.7" fill="#a8a85c" stroke="#20200a" stroke-width="1"/>
<circle cx="822.1" cy="737.1" r="3.6" fill="none" stroke="#d8d820" stroke-width="0.8"/>
<circle cx="829.1" cy="733.0" r="4.7" fill="#a8a85c" stroke="#20200a" stroke-width="1"/>
<circle cx="829.1" cy="733.0" r="3.6" fill="none" stroke="#d8d820" stroke-width="0.8"/>
<circle cx="827.0" cy="737.5" r="4.7" fill="#a8a85c" stroke="#20200a" stroke-width="1"/>
<circle cx="827.0" cy="737.5" r="3.6" fill="none" stroke="#d8d820" stroke-width="0.8"/>
<circle cx="824.8" cy="739.4" r="4.7" fill="#a8a85c" stroke="#20200a" stroke-width="1"/>
<circle cx="824.8" cy="739.4" r="3.6" fill="none" stroke="#d8d820" stroke-width="0.8"/>
<circle cx="834.1" cy="736.8" r="4.7" fill="#a8a85c" stroke="#20200a" stroke-width="1"/>
<circle cx="834.1" cy="736.8" r="3.6" fill="none" stroke="#d8d820" stroke-width="0.8"/>
<circle cx="830.2" cy="740.2" r="4.7" fill="#a8a85c" stroke="#20200a" stroke-width="1"/>
<circle cx="830.2" cy="740.2" r="3.6" fill="none" stroke="#d8d820" stroke-width="0.8"/>
<circle cx="828.7" cy="743.2" r="4.7" fill="#a8a85c" stroke="#20200a" stroke-width="1"/>
<circle cx="828.7" cy="743.2" r="3.6" fill="none" stroke="#d8d820" stroke-width="0.8"/>
<circle cx="836.9" cy="739.5" r="4.7" fill="#a8a85c" stroke="#20200a" stroke-width="1"/>
<circle cx="836.9" cy="739.5" r="3.6" fill="none" stroke="#d8d820" stroke-width="0.8"/>
<circle cx="834.7" cy="742.6" r="4.7" fill="#a8a85c" stroke="#20200a" stroke-width="1"/>
<circle cx="834.7" cy="742.6" r="3.6" fill="none" stroke="#d8d820" stroke-width="0.8"/>
<circle cx="831.1" cy="745.5" r="4.7" fill="#a8a85c" stroke="#20200a" stroke-width="1"/>
<circle cx="831.1" cy="745.5" r="3.6" fill="none" stroke="#d8d820" stroke-width="0.8"/>
<circle cx="839.9" cy="741.7" r="4.7" fill="#a8a85c" stroke="#20200a" stroke-width="1"/>
<circle cx="839.9" cy="741.7" r="3.6" fill="none" stroke="#d8d820" stroke-width="0.8"/>
<circle cx="837.3" cy="745.1" r="4.7" fill="#a8a85c" stroke="#20200a" stroke-width="1"/>
<circle cx="837.3" cy="745.1" r="3.6" fill="none" stroke="#d8d820" stroke-width="0.8"/>
<circle cx="835.2" cy="747.1" r="4.7" fill="#a8a85c" stroke="#20200a" stroke-width="1"/>
<circle cx="835.2" cy="747.1" r="3.6" fill="none" stroke="#d8d820" stroke-width="0.8"/>
<circle cx="842.6" cy="742.9" r="4.7" fill="#a8a85c" stroke="#20200a" stroke-width="1"/>
<circle cx="842.6" cy="742.9" r="3.6" fill="none" stroke="#d8d820" stroke-width="0.8"/>
<circle cx="840.8" cy="746.0" r="4.7" fill="#a8a85c" stroke="#20200a" stroke-width="1"/>
<circle cx="840.8" cy="746.0" r="3.6" fill="none" stroke="#d8d820" stroke-width="0.8"/>
<circle cx="838.3" cy="749.3" r="4.7" fill="#a8a85c" stroke="#20200a" stroke-width="1"/>
<circle cx="838.3" cy="749.3" r="3.6" fill="none" stroke="#d8d820" stroke-width="0.8"/>
<circle cx="846.5" cy="746.1" r="4.7" fill="#a8a85c" stroke="#20200a" stroke-width="1"/>
<circle cx="846.5" cy="746.1" r="3.6" fill="none" stroke="#d8d820" stroke-width="0.8"/>
<circle cx="844.2" cy="750.1" r="4.7" fill="#a8a85c" stroke="#20200a" stroke-width="1"/>
<circle cx="844.2" cy="750.1" r="3.6" fill="none" stroke="#d8d820" stroke-width="0.8"/>
<circle cx="840.7" cy="753.2" r="4.7" fill="#a8a85c" stroke="#20200a" stroke-width="1"/>
<circle cx="840.7" cy="753.2" r="3.6" fill="none" stroke="#d8d820" stroke-width="0.8"/>
<circle cx="849.7" cy="748.8" r="4.7" fill="#a8a85c" stroke="#20200a" stroke-width="1"/>
<circle cx="849.7" cy="748.8" r="3.6" fill="none" stroke="#d8d820" stroke-width="0.8"/>
<circle cx="847.7" cy="752.5" r="4.7" fill="#a8a85c" stroke="#20200a" stroke-width="1"/>
<circle cx="847.7" cy="752.5" r="3.6" fill="none" stroke="#d8d820" stroke-width="0.8"/>
<circle cx="844.7" cy="754.9" r="4.7" fill="#a8a85c" stroke="#20200a" stroke-width="1"/>
<circle cx="844.7" cy="754.9" r="3.6" fill="none" stroke="#d8d820" stroke-width="0.8"/>
<circle cx="854.0" cy="750.3" r="4.7" fill="#a8a85c" stroke="#20200a" stroke-width="1"/>
<circle cx="854.0" cy="750.3" r="3.6" fill="none" stroke="#d8d820" stroke-width="0.8"/>
<circle cx="851.0" cy="754.6" r="4.7" fill="#a8a85c" stroke="#20200a" stroke-width="1"/>
<circle cx="851.0" cy="754.6" r="3.6" fill="none" stroke="#d8d820" stroke-width="0.8"/>
<circle cx="847.3" cy="757.7" r="4.7" fill="#a8a85c" stroke="#20200a" stroke-width="1"/>
<circle cx="847.3" cy="757.7" r="3.6" fill="none" stroke="#d8d820" stroke-width="0.8"/>
<circle cx="856.8" cy="754.5" r="4.7" fill="#a8a85c" stroke="#20200a" stroke-width="1"/>
<circle cx="856.8" cy="754.5" r="3.6" fill="none" stroke="#d8d820" stroke-width="0.8"/>
<circle cx="853.7" cy="757.8" r="4.7" fill="#a8a85c" stroke="#20200a" stroke-width="1"/>
<circle cx="853.7" cy="757.8" r="3.6" fill="none" stroke="#d8d820" stroke-width="0.8"/>
<circle cx="851.6" cy="760.0" r="4.7" fill="#a8a85c" stroke="#20200a" stroke-width="1"/>
<circle cx="851.6" cy="760.0" r="3.6" fill="none" stroke="#d8d820" stroke-width="0.8"/>
<circle cx="806.3" cy="734.6" r="4.7" fill="#a8a85c" stroke="#20200a" stroke-width="1"/>
<circle cx="806.3" cy="734.6" r="3.6" fill="none" stroke="#d8d820" stroke-width="0.8"/>
<circle cx="801.0" cy="740.7" r="4.7" fill="#a8a85c" stroke="#20200a" stroke-width="1"/>
<circle cx="801.0" cy="740.7" r="3.6" fill="none" stroke="#d8d820" stroke-width="0.8"/>
<circle cx="808.3" cy="739.4" r="4.7" fill="#a8a85c" stroke="#20200a" stroke-width="1"/>
<circle cx="808.3" cy="739.4" r="3.6" fill="none" stroke="#d8d820" stroke-width="0.8"/>
<circle cx="803.4" cy="743.6" r="4.7" fill="#a8a85c" stroke="#20200a" stroke-width="1"/>
<circle cx="803.4" cy="743.6" r="3.6" fill="none" stroke="#d8d820" stroke-width="0.8"/>
<circle cx="811.9" cy="742.4" r="4.7" fill="#a8a85c" stroke="#20200a" stroke-width="1"/>
<circle cx="811.9" cy="742.4" r="3.6" fill="none" stroke="#d8d820" stroke-width="0.8"/>
<circle cx="806.3" cy="746.7" r="4.7" fill="#a8a85c" stroke="#20200a" stroke-width="1"/>
<circle cx="806.3" cy="746.7" r="3.6" fill="none" stroke="#d8d820" stroke-width="0.8"/>
<circle cx="814.8" cy="745.1" r="4.7" fill="#a8a85c" stroke="#20200a" stroke-width="1"/>
<circle cx="814.8" cy="745.1" r="3.6" fill="none" stroke="#d8d820" stroke-width="0.8"/>
<circle cx="810.7" cy="749.6" r="4.7" fill="#a8a85c" stroke="#20200a" stroke-width="1"/>
<circle cx="810.7" cy="749.6" r="3.6" fill="none" stroke="#d8d820" stroke-width="0.8"/>
<circle cx="818.8" cy="748.0" r="4.7" fill="#a8a85c" stroke="#20200a" stroke-width="1"/>
<circle cx="818.8" cy="748.0" r="3.6" fill="none" stroke="#d8d820" stroke-width="0.8"/>
<circle cx="813.2" cy="752.7" r="4.7" fill="#a8a85c" stroke="#20200a" stroke-width="1"/>
<circle cx="813.2" cy="752.7" r="3.6" fill="none" stroke="#d8d820" stroke-width="0.8"/>
<circle cx="821.3" cy="752.3" r="4.7" fill="#a8a85c" stroke="#20200a" stroke-width="1"/>
<circle cx="821.3" cy="752.3" r="3.6" fill="none" stroke="#d8d820" stroke-width="0.8"/>
<circle cx="816.7" cy="756.9" r="4.7" fill="#a8a85c" stroke="#20200a" stroke-width="1"/>
<circle cx="816.7" cy="756.9" r="3.6" fill="none" stroke="#d8d820" stroke-width="0.8"/>
<circle cx="824.1" cy="754.2" r="4.7" fill="#a8a85c" stroke="#20200a" stroke-width="1"/>
<circle cx="824.1" cy="754.2" r="3.6" fill="none" stroke="#d8d820" stroke-width="0.8"/>
<circle cx="819.1" cy="759.6" r="4.7" fill="#a8a85c" stroke="#20200a" stroke-width="1"/>
<circle cx="819.1" cy="759.6" r="3.6" fill="none" stroke="#d8d820" stroke-width="0.8"/>
</g>
<path d="M494.5 509 L489.5 514.5 L494.5 520" fill="none" stroke="#d4d4d4" stroke-width="2.2"/>
<path d="M500 447 H520 a5 5 0 0 1 5 5 V496 H500 Z" fill="#4a4a4a"/>
<rect x="500" y="496" width="25" height="86" fill="#2d2d2d" />
<path d="M509 459.5 L517 471 L509 483" fill="none" stroke="#333" stroke-width="2.8" stroke-linecap="round"/>
<text x="516.8" y="536.5" font-size="12" fill="#cfcfcf" text-anchor="middle" font-weight="normal" transform="rotate(-90 516.8 536.5)">Wavelengths</text>
<text x="1097" y="89" font-size="15.9" fill="#e8e8e8" text-anchor="start" font-weight="normal" >Max variance image (Component  1)</text>
<rect x="1562.5" y="79.5" width="17" height="17" fill="none" stroke="#dcdcdc" stroke-width="1.3"/>
<path d="M1574.8 81 L1566.2 87.8 L1574.8 94.6" fill="none" stroke="#d8d8d8" stroke-width="2.2"/>
<rect x="1585.5" y="79.5" width="17" height="17" fill="none" stroke="#dcdcdc" stroke-width="1.3"/>
<path d="M1590.2 81 L1598.8 87.8 L1590.2 94.6" fill="none" stroke="#d8d8d8" stroke-width="2.2"/>
<rect x="1608" y="78" width="20" height="20" rx="5" fill="#646a6e"/>
<path d="M1610.7 85 L1618 78.9 L1625.3 85 L1618 91.1 Z M1610.7 90 L1618 96.2 L1625.3 90" fill="none" stroke="#d4d4d4" stroke-width="1.7"/>
<rect x="1271" y="120" width="195" height="801" fill="url(#gImg)" />
<rect x="1317.9" y="555.8" width="1.5" height="1.5" fill="#ffb000"/>
<rect x="1448.8" y="499.8" width="1.5" height="1.5" fill="#f08000"/>
<rect x="1284.6" y="131.5" width="1.5" height="1.5" fill="#ffe400"/>
<rect x="1322.1" y="308.2" width="1.5" height="1.5" fill="#ffe400"/>
<rect x="1376.4" y="560.2" width="1.5" height="1.5" fill="#ffe400"/>
<rect x="1395.3" y="241.3" width="1.5" height="1.5" fill="#ffa800"/>
<rect x="1439.5" y="539.0" width="1.5" height="1.5" fill="#ff9a00"/>
<rect x="1401.6" y="172.2" width="1.5" height="1.5" fill="#f08000"/>
<rect x="1280.3" y="744.3" width="1.5" height="1.5" fill="#ffb000"/>
<rect x="1363.2" y="695.3" width="1.5" height="1.5" fill="#ffe400"/>
<rect x="1409.8" y="857.0" width="1.5" height="1.5" fill="#ffe400"/>
<rect x="1412.5" y="582.0" width="1.5" height="1.5" fill="#ffa800"/>
<rect x="1441.6" y="198.9" width="1.5" height="1.5" fill="#ffa800"/>
<rect x="1367.5" y="327.1" width="1.5" height="1.5" fill="#ffe400"/>
<rect x="1422.3" y="804.3" width="1.5" height="1.5" fill="#ffe400"/>
<rect x="1369.9" y="429.3" width="1.5" height="1.5" fill="#ffb000"/>
<rect x="1375.1" y="446.7" width="1.5" height="1.5" fill="#ffa800"/>
<rect x="1446.5" y="665.9" width="1.5" height="1.5" fill="#ff9a00"/>
<rect x="1437.3" y="912.8" width="1.5" height="1.5" fill="#ffa800"/>
<rect x="1406.8" y="381.8" width="1.5" height="1.5" fill="#f08000"/>
<rect x="1446.6" y="575.7" width="1.5" height="1.5" fill="#ffa800"/>
<rect x="1394.2" y="910.5" width="1.5" height="1.5" fill="#ffb000"/>
<rect x="1327.0" y="171.7" width="1.5" height="1.5" fill="#ffe400"/>
<rect x="1289.1" y="760.7" width="1.5" height="1.5" fill="#ffe400"/>
<rect x="1445.1" y="137.1" width="1.5" height="1.5" fill="#ffe400"/>
<rect x="1420.4" y="818.3" width="1.5" height="1.5" fill="#ff9a00"/>
<rect x="1388.8" y="729.5" width="1.5" height="1.5" fill="#ffe400"/>
<rect x="1410.7" y="385.4" width="1.5" height="1.5" fill="#ffb000"/>
<rect x="1369.5" y="918.8" width="1.5" height="1.5" fill="#ffb000"/>
<rect x="1273.4" y="207.4" width="1.5" height="1.5" fill="#f08000"/>
<rect x="1278.1" y="278.7" width="1.5" height="1.5" fill="#ffe400"/>
<rect x="1328.3" y="331.4" width="1.5" height="1.5" fill="#ff9a00"/>
<rect x="1461.1" y="392.5" width="1.5" height="1.5" fill="#ffb000"/>
<rect x="1457.0" y="837.4" width="1.5" height="1.5" fill="#ffe400"/>
<rect x="1344.7" y="816.0" width="1.5" height="1.5" fill="#ffe400"/>
<rect x="1396.3" y="596.9" width="1.5" height="1.5" fill="#f08000"/>
<rect x="1291.8" y="898.3" width="1.5" height="1.5" fill="#f08000"/>
<rect x="1324.4" y="627.8" width="1.5" height="1.5" fill="#ffa800"/>
<rect x="1452.7" y="470.5" width="1.5" height="1.5" fill="#ffb000"/>
<rect x="1372.6" y="559.2" width="1.5" height="1.5" fill="#ff9a00"/>
<rect x="1424.2" y="910.0" width="1.5" height="1.5" fill="#ffb000"/>
<rect x="1275.9" y="613.0" width="1.5" height="1.5" fill="#ffa800"/>
<rect x="1283.6" y="622.2" width="1.5" height="1.5" fill="#ffe400"/>
<rect x="1340.1" y="854.0" width="1.5" height="1.5" fill="#f08000"/>
<rect x="1408.4" y="710.7" width="1.5" height="1.5" fill="#ff9a00"/>
<rect x="1385.7" y="883.9" width="1.5" height="1.5" fill="#ff9a00"/>
<rect x="1457.9" y="321.6" width="1.5" height="1.5" fill="#ffe400"/>
<rect x="1329.6" y="601.6" width="1.5" height="1.5" fill="#ffa800"/>
<rect x="1342.2" y="370.8" width="1.5" height="1.5" fill="#ffb000"/>
<rect x="1434.9" y="332.0" width="1.5" height="1.5" fill="#ffe400"/>
<rect x="1292.2" y="770.6" width="1.5" height="1.5" fill="#f08000"/>
<rect x="1404.0" y="226.0" width="1.5" height="1.5" fill="#f08000"/>
<rect x="1314.9" y="763.2" width="1.5" height="1.5" fill="#ffa800"/>
<rect x="1335.3" y="662.8" width="1.5" height="1.5" fill="#ff9a00"/>
<rect x="1291.7" y="378.3" width="1.5" height="1.5" fill="#ffb000"/>
<rect x="1402.3" y="300.3" width="1.5" height="1.5" fill="#ffa800"/>
<rect x="1287.4" y="713.9" width="1.5" height="1.5" fill="#ffa800"/>
<rect x="1442.8" y="481.4" width="1.5" height="1.5" fill="#ffa800"/>
<rect x="1423.9" y="148.1" width="1.5" height="1.5" fill="#ffa800"/>
<rect x="1332.8" y="789.1" width="1.5" height="1.5" fill="#f08000"/>
<rect x="1307.4" y="343.6" width="1.5" height="1.5" fill="#ff9a00"/>
<rect x="1427.6" y="396.9" width="1.5" height="1.5" fill="#ffa800"/>
<rect x="1353.3" y="535.2" width="1.5" height="1.5" fill="#ffb000"/>
<rect x="1361.7" y="627.7" width="1.5" height="1.5" fill="#ffb000"/>
<rect x="1353.0" y="448.2" width="1.5" height="1.5" fill="#ffe400"/>
<rect x="1302.1" y="124.7" width="1.5" height="1.5" fill="#f08000"/>
<rect x="1462.5" y="468.0" width="1.5" height="1.5" fill="#ffa800"/>
<rect x="1278.2" y="485.9" width="1.5" height="1.5" fill="#f08000"/>
<rect x="1457.9" y="555.5" width="1.5" height="1.5" fill="#ffa800"/>
<rect x="1438.3" y="806.5" width="1.5" height="1.5" fill="#ffb000"/>
<rect x="1295.2" y="316.4" width="1.5" height="1.5" fill="#ff9a00"/>
<rect x="1446.4" y="675.3" width="1.5" height="1.5" fill="#ffa800"/>
<rect x="1445.0" y="839.8" width="1.5" height="1.5" fill="#f08000"/>
<rect x="1281.5" y="505.4" width="1.5" height="1.5" fill="#ff9a00"/>
<rect x="1305.2" y="360.6" width="1.5" height="1.5" fill="#ff9a00"/>
<rect x="1373.3" y="451.6" width="1.5" height="1.5" fill="#f08000"/>
<rect x="1293.9" y="221.2" width="1.5" height="1.5" fill="#f08000"/>
<rect x="1364.1" y="746.1" width="1.5" height="1.5" fill="#ffb000"/>
<rect x="1314.6" y="218.7" width="1.5" height="1.5" fill="#ff9a00"/>
<rect x="1305.1" y="753.5" width="1.5" height="1.5" fill="#ffa800"/>
<rect x="1430.9" y="127.0" width="1.5" height="1.5" fill="#f08000"/>
<rect x="1438.5" y="160.9" width="1.5" height="1.5" fill="#ffb000"/>
<rect x="1319.9" y="614.9" width="1.5" height="1.5" fill="#f08000"/>
<rect x="1353.6" y="498.8" width="1.5" height="1.5" fill="#ff9a00"/>
<rect x="1437.4" y="740.4" width="1.5" height="1.5" fill="#ff9a00"/>
<rect x="1296.1" y="175.7" width="1.5" height="1.5" fill="#ff9a00"/>
<rect x="1436.9" y="189.8" width="1.5" height="1.5" fill="#f08000"/>
<rect x="1366.6" y="246.5" width="1.5" height="1.5" fill="#ff9a00"/>
<rect x="1339.8" y="637.9" width="1.5" height="1.5" fill="#f08000"/>
<rect x="1330.7" y="332.7" width="1.5" height="1.5" fill="#ffb000"/>
<rect x="1354.7" y="223.0" width="1.5" height="1.5" fill="#ff9a00"/>
<rect x="1410.2" y="424.8" width="1.5" height="1.5" fill="#ff9a00"/>
<rect x="1381.4" y="155.3" width="1.5" height="1.5" fill="#ffe400"/>
<rect x="1388.7" y="746.3" width="1.5" height="1.5" fill="#ffe400"/>
<rect x="1394.9" y="155.7" width="1.5" height="1.5" fill="#ffe400"/>
<rect x="1282.2" y="622.3" width="1.5" height="1.5" fill="#ffb000"/>
<rect x="1353.2" y="675.6" width="1.5" height="1.5" fill="#ffe400"/>
<rect x="1275.5" y="295.7" width="1.5" height="1.5" fill="#ffb000"/>
<rect x="1406.2" y="178.2" width="1.5" height="1.5" fill="#ffe400"/>
<rect x="1315.3" y="225.2" width="1.5" height="1.5" fill="#ff9a00"/>
<rect x="1452.7" y="420.0" width="1.5" height="1.5" fill="#f08000"/>
<rect x="1424.6" y="330.5" width="1.5" height="1.5" fill="#ffe400"/>
<rect x="1405.3" y="871.3" width="1.5" height="1.5" fill="#f08000"/>
<rect x="1424.9" y="654.4" width="1.5" height="1.5" fill="#ffb000"/>
<rect x="1380.8" y="203.4" width="1.5" height="1.5" fill="#f08000"/>
<rect x="1410.3" y="499.4" width="1.5" height="1.5" fill="#ffa800"/>
<rect x="1421.4" y="156.4" width="1.5" height="1.5" fill="#ff9a00"/>
<rect x="1380.9" y="647.7" width="1.5" height="1.5" fill="#ffe400"/>
<rect x="1306.6" y="139.8" width="1.5" height="1.5" fill="#ff9a00"/>
<rect x="1276.9" y="213.0" width="1.5" height="1.5" fill="#ffe400"/>
<rect x="1433.4" y="882.0" width="1.5" height="1.5" fill="#f08000"/>
<rect x="1329.8" y="191.9" width="1.5" height="1.5" fill="#f08000"/>
<rect x="1370.7" y="692.4" width="1.5" height="1.5" fill="#ff9a00"/>
<rect x="1379.0" y="200.8" width="1.5" height="1.5" fill="#f08000"/>
<rect x="1283.8" y="380.1" width="1.5" height="1.5" fill="#f08000"/>
<rect x="1306.8" y="182.8" width="1.5" height="1.5" fill="#ffa800"/>
<rect x="1396.7" y="483.9" width="1.5" height="1.5" fill="#ffe400"/>
<rect x="1320.8" y="600.0" width="1.5" height="1.5" fill="#ffb000"/>
<rect x="1379.4" y="893.1" width="1.5" height="1.5" fill="#ffe400"/>
<rect x="1368.6" y="898.5" width="1.5" height="1.5" fill="#ffe400"/>
<rect x="1434.8" y="893.7" width="1.5" height="1.5" fill="#ffe400"/>
<rect x="1405.3" y="725.1" width="1.5" height="1.5" fill="#f08000"/>
<rect x="1404.3" y="245.8" width="1.5" height="1.5" fill="#ffe400"/>
<rect x="1445.2" y="240.3" width="1.5" height="1.5" fill="#ff9a00"/>
<rect x="1368.1" y="507.3" width="1.5" height="1.5" fill="#f08000"/>
<rect x="1455.5" y="589.6" width="1.5" height="1.5" fill="#ffa800"/>
<rect x="1298.3" y="721.9" width="1.5" height="1.5" fill="#ffa800"/>
<rect x="1385.0" y="372.6" width="1.5" height="1.5" fill="#ffa800"/>
<rect x="1436.3" y="550.9" width="1.5" height="1.5" fill="#ffb000"/>
<rect x="1401.6" y="804.4" width="1.5" height="1.5" fill="#f08000"/>
<rect x="1436.8" y="588.1" width="1.5" height="1.5" fill="#ffb000"/>
<rect x="1443.7" y="366.5" width="1.5" height="1.5" fill="#ffb000"/>
<rect x="1364.5" y="426.8" width="1.5" height="1.5" fill="#ffa800"/>
<rect x="1382.0" y="311.8" width="1.5" height="1.5" fill="#ffe400"/>
<rect x="1421.4" y="235.7" width="1.5" height="1.5" fill="#ffe400"/>
<rect x="1407.4" y="285.4" width="1.5" height="1.5" fill="#f08000"/>
<rect x="1433.1" y="777.5" width="1.5" height="1.5" fill="#f08000"/>
<rect x="1277.4" y="914.2" width="1.5" height="1.5" fill="#ff9a00"/>
<rect x="1437.3" y="440.8" width="1.5" height="1.5" fill="#ff9a00"/>
<rect x="1362.2" y="304.5" width="1.5" height="1.5" fill="#ffa800"/>
<rect x="1397.1" y="742.1" width="1.5" height="1.5" fill="#ff9a00"/>
<rect x="1457.0" y="803.3" width="1.5" height="1.5" fill="#ffa800"/>
<rect x="1443.8" y="740.9" width="1.5" height="1.5" fill="#ffa800"/>
<rect x="1308.1" y="684.1" width="1.5" height="1.5" fill="#ff9a00"/>
<rect x="1445.7" y="324.8" width="1.5" height="1.5" fill="#ff9a00"/>
<rect x="1332.5" y="459.2" width="1.5" height="1.5" fill="#ff9a00"/>
<rect x="1294.8" y="332.1" width="1.5" height="1.5" fill="#ffb000"/>
<rect x="1279.0" y="482.4" width="1.5" height="1.5" fill="#ffb000"/>
<rect x="1273.3" y="388.5" width="1.5" height="1.5" fill="#ffe400"/>
<rect x="1345.3" y="183.3" width="1.5" height="1.5" fill="#f08000"/>
<rect x="1415.3" y="512.5" width="1.5" height="1.5" fill="#ffa800"/>
<rect x="1377.1" y="216.2" width="1.5" height="1.5" fill="#ffb000"/>
<rect x="1286.7" y="466.6" width="1.5" height="1.5" fill="#ffe400"/>
<rect x="1443.2" y="847.1" width="1.5" height="1.5" fill="#ff9a00"/>
<rect x="1373.8" y="680.9" width="1.5" height="1.5" fill="#ffb000"/>
<rect x="1418.2" y="357.1" width="1.5" height="1.5" fill="#ffb000"/>
<rect x="1292.7" y="875.6" width="1.5" height="1.5" fill="#ffb000"/>
<rect x="1401.9" y="549.4" width="1.5" height="1.5" fill="#ff9a00"/>
<rect x="1400.7" y="527.4" width="1.5" height="1.5" fill="#ff9a00"/>
<rect x="1410.6" y="663.2" width="1.5" height="1.5" fill="#f08000"/>
<rect x="1415.3" y="637.0" width="1.5" height="1.5" fill="#ffa800"/>
<rect x="1306.6" y="832.0" width="1.5" height="1.5" fill="#ffe400"/>
<rect x="1295.8" y="865.5" width="1.5" height="1.5" fill="#ffa800"/>
<rect x="1449.7" y="636.3" width="1.5" height="1.5" fill="#f08000"/>
<rect x="1353.1" y="361.2" width="1.5" height="1.5" fill="#ffa800"/>
<rect x="1360.3" y="370.6" width="1.5" height="1.5" fill="#ffa800"/>
<rect x="1408.2" y="206.8" width="1.5" height="1.5" fill="#ffa800"/>
<rect x="1417.6" y="555.0" width="1.5" height="1.5" fill="#ffe400"/>
<rect x="1341.3" y="333.4" width="1.5" height="1.5" fill="#ffe400"/>
<rect x="1282.3" y="230.1" width="1.5" height="1.5" fill="#ffe400"/>
<rect x="1369.4" y="318.5" width="1.5" height="1.5" fill="#f08000"/>
<rect x="1340.3" y="387.0" width="1.5" height="1.5" fill="#ffe400"/>
<rect x="1358.5" y="767.5" width="1.5" height="1.5" fill="#ff9a00"/>
<rect x="1340.1" y="797.7" width="1.5" height="1.5" fill="#ff9a00"/>
<rect x="1301.3" y="592.5" width="1.5" height="1.5" fill="#ff9a00"/>
<rect x="1380.9" y="848.0" width="1.5" height="1.5" fill="#ff9a00"/>
<rect x="1307.7" y="272.1" width="1.5" height="1.5" fill="#ffe400"/>
<rect x="1401.3" y="433.6" width="1.5" height="1.5" fill="#ffa800"/>
<rect x="1386.2" y="238.0" width="1.5" height="1.5" fill="#ffe400"/>
<rect x="1426.1" y="556.2" width="1.5" height="1.5" fill="#ffa800"/>
<rect x="1381.7" y="282.5" width="1.5" height="1.5" fill="#ffb000"/>
<rect x="1343.3" y="355.1" width="1.5" height="1.5" fill="#ffe400"/>
<rect x="1444.0" y="879.5" width="1.5" height="1.5" fill="#ffe400"/>
<rect x="1333.0" y="845.0" width="1.5" height="1.5" fill="#ffb000"/>
<rect x="1394.3" y="901.6" width="1.5" height="1.5" fill="#ffb000"/>
<rect x="1444.9" y="654.4" width="1.5" height="1.5" fill="#ff9a00"/>
<rect x="1388.1" y="701.7" width="1.5" height="1.5" fill="#ff9a00"/>
<rect x="1292.7" y="725.0" width="1.5" height="1.5" fill="#ffa800"/>
<rect x="1366.9" y="539.4" width="1.5" height="1.5" fill="#ffe400"/>
<rect x="1310.4" y="745.9" width="1.5" height="1.5" fill="#ffa800"/>
<rect x="1279.2" y="520.9" width="1.5" height="1.5" fill="#ffe400"/>
<rect x="1293.5" y="347.3" width="1.5" height="1.5" fill="#ffa800"/>
<rect x="1298.2" y="754.1" width="1.5" height="1.5" fill="#f08000"/>
<rect x="1450.2" y="141.4" width="1.5" height="1.5" fill="#f08000"/>
<rect x="1317.0" y="183.2" width="1.5" height="1.5" fill="#f08000"/>
<rect x="1275.6" y="392.4" width="1.5" height="1.5" fill="#ffb000"/>
<rect x="1440.0" y="676.0" width="1.5" height="1.5" fill="#ffa800"/>
<rect x="1287.5" y="791.4" width="1.5" height="1.5" fill="#ff9a00"/>
<rect x="1410.2" y="712.0" width="1.5" height="1.5" fill="#ffb000"/>
<rect x="1464.6" y="284.9" width="1.5" height="1.5" fill="#ff9a00"/>
<rect x="1438.3" y="470.2" width="1.5" height="1.5" fill="#ffa800"/>
<rect x="1365.6" y="208.2" width="1.5" height="1.5" fill="#ff9a00"/>
<rect x="1350.8" y="796.4" width="1.5" height="1.5" fill="#ffa800"/>
<rect x="1347.6" y="499.2" width="1.5" height="1.5" fill="#ff9a00"/>
<rect x="1375.7" y="458.3" width="1.5" height="1.5" fill="#ffe400"/>
<rect x="1330.8" y="492.1" width="1.5" height="1.5" fill="#ffe400"/>
<rect x="1356.6" y="484.8" width="1.5" height="1.5" fill="#ff9a00"/>
<rect x="1410.9" y="414.2" width="1.5" height="1.5" fill="#ffb000"/>
<rect x="1358.4" y="409.9" width="1.5" height="1.5" fill="#ffe400"/>
<rect x="1315.2" y="123.2" width="1.5" height="1.5" fill="#ffa800"/>
<rect x="1321.9" y="416.3" width="1.5" height="1.5" fill="#ffe400"/>
<rect x="1375.0" y="248.1" width="1.5" height="1.5" fill="#ff9a00"/>
<rect x="1305.0" y="443.6" width="1.5" height="1.5" fill="#ffa800"/>
<rect x="1394.9" y="232.3" width="1.5" height="1.5" fill="#f08000"/>
<rect x="1304.5" y="512.7" width="1.5" height="1.5" fill="#ff9a00"/>
<rect x="1434.4" y="443.1" width="1.5" height="1.5" fill="#ffb000"/>
<rect x="1350.7" y="683.1" width="1.5" height="1.5" fill="#ff9a00"/>
<rect x="1318.2" y="152.3" width="1.5" height="1.5" fill="#ffe400"/>
<rect x="1277.1" y="892.5" width="1.5" height="1.5" fill="#ffa800"/>
<rect x="1318.6" y="431.9" width="1.5" height="1.5" fill="#ffa800"/>
<rect x="1303.8" y="618.3" width="1.5" height="1.5" fill="#ffb000"/>
<rect x="1448.1" y="595.9" width="1.5" height="1.5" fill="#ffb000"/>
<rect x="1325.1" y="750.5" width="1.5" height="1.5" fill="#ffe400"/>
<rect x="1424.3" y="889.4" width="1.5" height="1.5" fill="#ffe400"/>
<rect x="1320.2" y="333.4" width="1.5" height="1.5" fill="#ffb000"/>
<rect x="1393.4" y="396.4" width="1.5" height="1.5" fill="#ff9a00"/>
<rect x="1282.9" y="468.9" width="1.5" height="1.5" fill="#ff9a00"/>
<rect x="1386.3" y="123.9" width="1.5" height="1.5" fill="#ff9a00"/>
<rect x="1403.4" y="136.2" width="1.5" height="1.5" fill="#f08000"/>
<rect x="1279.1" y="164.1" width="1.5" height="1.5" fill="#f08000"/>
<rect x="1445.8" y="281.4" width="1.5" height="1.5" fill="#ffe400"/>
<rect x="1337.6" y="503.4" width="1.5" height="1.5" fill="#ffb000"/>
<rect x="1453.4" y="148.3" width="1.5" height="1.5" fill="#ffb000"/>
<rect x="1417.1" y="625.6" width="1.5" height="1.5" fill="#ffe400"/>
<rect x="1288.9" y="355.5" width="1.5" height="1.5" fill="#ffe400"/>
<rect x="1294.1" y="432.5" width="1.5" height="1.5" fill="#ffb000"/>
<rect x="1375.5" y="742.9" width="1.5" height="1.5" fill="#ffe400"/>
<rect x="1305.7" y="712.1" width="1.5" height="1.5" fill="#ffe400"/>
<rect x="1433.3" y="563.1" width="1.5" height="1.5" fill="#ffa800"/>
<rect x="1342.0" y="452.4" width="1.5" height="1.5" fill="#ffa800"/>
<rect x="1357.8" y="682.5" width="1.5" height="1.5" fill="#ffb000"/>
<rect x="1324.0" y="256.6" width="1.5" height="1.5" fill="#f08000"/>
<rect x="1448.6" y="677.8" width="1.5" height="1.5" fill="#ffe400"/>
<rect x="1280.2" y="258.2" width="1.5" height="1.5" fill="#ff9a00"/>
<rect x="1430.8" y="194.5" width="1.5" height="1.5" fill="#ff9a00"/>
<rect x="1333.8" y="600.9" width="1.5" height="1.5" fill="#ff9a00"/>
<rect x="1441.6" y="817.9" width="1.5" height="1.5" fill="#ffe400"/>
<rect x="1362.0" y="815.1" width="1.5" height="1.5" fill="#ffb000"/>
<rect x="1464.4" y="122.3" width="1.5" height="1.5" fill="#ffa800"/>
<rect x="1349.1" y="884.6" width="1.5" height="1.5" fill="#ff9a00"/>
<rect x="1337.3" y="369.7" width="1.5" height="1.5" fill="#ffe400"/>
<rect x="1287.6" y="639.7" width="1.5" height="1.5" fill="#ffa800"/>
<rect x="1404.8" y="902.1" width="1.5" height="1.5" fill="#ffa800"/>
<rect x="1385.0" y="130.3" width="1.5" height="1.5" fill="#ffa800"/>
<rect x="1327.5" y="287.8" width="1.5" height="1.5" fill="#f08000"/>
<rect x="1371.5" y="524.4" width="1.5" height="1.5" fill="#f08000"/>
<rect x="1333.6" y="826.4" width="1.5" height="1.5" fill="#ffa800"/>
<rect x="1362.2" y="618.3" width="1.5" height="1.5" fill="#ff9a00"/>
<rect x="1431.3" y="210.9" width="1.5" height="1.5" fill="#ff9a00"/>
<rect x="1437.8" y="202.0" width="1.5" height="1.5" fill="#ffb000"/>
<rect x="1278.1" y="492.7" width="1.5" height="1.5" fill="#e05000"/>
<rect x="1281.3" y="783.7" width="1.5" height="1.5" fill="#e05000"/>
<rect x="1290.8" y="633.8" width="1.5" height="1.5" fill="#e05000"/>
<rect x="1294.3" y="817.5" width="1.5" height="1.5" fill="#e05000"/>
<rect x="1284.3" y="602.9" width="1.5" height="1.5" fill="#e05000"/>
<rect x="1286.7" y="209.6" width="1.5" height="1.5" fill="#e05000"/>
<rect x="1296.0" y="595.9" width="1.5" height="1.5" fill="#e05000"/>
<rect x="1295.6" y="285.6" width="1.5" height="1.5" fill="#e05000"/>
<rect x="1288.9" y="491.9" width="1.5" height="1.5" fill="#e05000"/>
<rect x="1293.5" y="182.7" width="1.5" height="1.5" fill="#e05000"/>
<rect x="1284.3" y="508.1" width="1.5" height="1.5" fill="#e05000"/>
<rect x="1277.7" y="562.6" width="1.5" height="1.5" fill="#e05000"/>
<rect x="1293.6" y="458.9" width="1.5" height="1.5" fill="#e05000"/>
<rect x="1291.6" y="605.1" width="1.5" height="1.5" fill="#e05000"/>
<rect x="1281.1" y="401.1" width="1.5" height="1.5" fill="#e05000"/>
<rect x="1299.9" y="388.8" width="1.5" height="1.5" fill="#e05000"/>
<rect x="1286.3" y="188.3" width="1.5" height="1.5" fill="#e05000"/>
<rect x="1281.2" y="253.1" width="1.5" height="1.5" fill="#e05000"/>
<rect x="1298.3" y="701.4" width="1.5" height="1.5" fill="#e05000"/>
<rect x="1297.0" y="909.3" width="1.5" height="1.5" fill="#e05000"/>
<rect x="1290.7" y="865.1" width="1.5" height="1.5" fill="#e05000"/>
<rect x="1288.9" y="455.6" width="1.5" height="1.5" fill="#e05000"/>
<rect x="1298.8" y="842.6" width="1.5" height="1.5" fill="#e05000"/>
<rect x="1298.8" y="507.9" width="1.5" height="1.5" fill="#e05000"/>
<rect x="1294.6" y="446.2" width="1.5" height="1.5" fill="#e05000"/>
<rect x="1299.9" y="856.3" width="1.5" height="1.5" fill="#e05000"/>
<rect x="1283.0" y="867.4" width="1.5" height="1.5" fill="#e05000"/>
<rect x="1280.4" y="197.6" width="1.5" height="1.5" fill="#e05000"/>
<rect x="1293.3" y="356.1" width="1.5" height="1.5" fill="#e05000"/>
<rect x="1288.5" y="631.8" width="1.5" height="1.5" fill="#e05000"/>
<rect x="1277.0" y="716.4" width="1.5" height="1.5" fill="#e05000"/>
<rect x="1282.6" y="466.5" width="1.5" height="1.5" fill="#e05000"/>
<rect x="1284.3" y="713.9" width="1.5" height="1.5" fill="#e05000"/>
<rect x="1293.9" y="350.6" width="1.5" height="1.5" fill="#e05000"/>
<rect x="1278.5" y="360.2" width="1.5" height="1.5" fill="#e05000"/>
<rect x="1285.9" y="183.0" width="1.5" height="1.5" fill="#e05000"/>
<rect x="1279.7" y="730.4" width="1.5" height="1.5" fill="#e05000"/>
<rect x="1292.8" y="901.1" width="1.5" height="1.5" fill="#e05000"/>
<rect x="1299.5" y="821.0" width="1.5" height="1.5" fill="#e05000"/>
<rect x="1284.9" y="249.9" width="1.5" height="1.5" fill="#e05000"/>
<polygon points="1328.5,153.6 1385.2,167.8 1384.8,217.3 1321.7,201.7" fill="#82e890" stroke="#50e8c0" stroke-width="1.2" stroke-linejoin="round"/>
<polygon points="1399.0,155.6 1441.1,148.1 1447.2,201.7 1404.5,202.7" fill="#9aea70" stroke="#58e8b0" stroke-width="1.2" stroke-linejoin="round"/>
<polygon points="1324.2,216.0 1374.0,222.1 1367.8,258.7 1320.4,265.5" fill="#48e8c8" stroke="#38e0e0" stroke-width="1.2" stroke-linejoin="round"/>
<polygon points="1390.2,221.4 1442.2,214.4 1439.8,246.5 1392.3,254.7" fill="#38e6e0" stroke="#20d0f0" stroke-width="1.2" stroke-linejoin="round"/>
<polygon points="1340.0,290.5 1372.7,299.6 1372.0,346.9 1325.9,327.2" fill="#2080f2" stroke="#1040e0" stroke-width="1.2" stroke-linejoin="round"/>
<polygon points="1382.1,298.2 1433.4,289.9 1443.2,331.6 1397.4,342.8" fill="#40f0c8" stroke="#38e8d0" stroke-width="1.2" stroke-linejoin="round"/>
<polygon points="1325.4,352.0 1374.9,360.7 1375.6,409.4 1323.3,423.2" fill="#1a62ea" stroke="#0c38d8" stroke-width="1.2" stroke-linejoin="round"/>
<polygon points="1386.9,355.9 1432.6,355.3 1441.7,397.0 1386.9,415.9" fill="#60e8a8" stroke="#50e0c0" stroke-width="1.2" stroke-linejoin="round"/>
<polygon points="1329.9,459.0 1376.7,460.4 1364.4,502.4 1328.5,495.0" fill="#2080f0" stroke="#1050e0" stroke-width="1.2" stroke-linejoin="round"/>
<polygon points="1388.2,463.1 1433.0,460.4 1439.8,491.3 1395.0,484.1" fill="#2090f0" stroke="#1870e8" stroke-width="1.2" stroke-linejoin="round"/>
<polygon points="1319.7,519.4 1376.7,517.3 1378.0,555.3 1319.7,554.0" fill="#1868e8" stroke="#0c40d8" stroke-width="1.2" stroke-linejoin="round"/>
<polygon points="1399.7,505.8 1449.9,509.9 1447.2,548.5 1388.9,561.4 1385.5,556.7" fill="#2078f0" stroke="#1050e0" stroke-width="1.2" stroke-linejoin="round"/>
<polygon points="1341.4,586.5 1377.0,636.0 1350.1,649.8 1322.5,627.2 1335.6,598.9" fill="#38e8d0" stroke="#20d8f0" stroke-width="1.2" stroke-linejoin="round"/>
<polygon points="1382.1,615.6 1437.4,617.8 1425.7,652.7 1419.9,660.0 1382.1,654.1" fill="#40e8c8" stroke="#28d8f0" stroke-width="1.2" stroke-linejoin="round"/>
<polygon points="1318.9,683.2 1376.3,669.4 1377.0,690.5 1334.9,726.1 1326.9,707.9" fill="#40e8c8" stroke="#28d8f0" stroke-width="1.2" stroke-linejoin="round"/>
<polygon points="1402.5,668.7 1444.6,673.0 1425.0,721.0 1385.8,716.6" fill="#40e0d0" stroke="#20c8f0" stroke-width="1.2" stroke-linejoin="round"/>
<polygon points="1326.3,745.3 1361.9,755.4 1338.7,833.9 1309.6,815.8" fill="#20a0f0" stroke="#1070e8" stroke-width="1.2" stroke-linejoin="round"/>
<polygon points="1376.5,752.5 1433.9,748.9 1421.5,807.8 1385.2,813.6" fill="#20a0f0" stroke="#1080e8" stroke-width="1.2" stroke-linejoin="round"/>
<polygon points="1356.1,812.8 1373.6,809.2 1393.9,869.5 1348.9,869.5" fill="#20b0f0" stroke="#1088e8" stroke-width="1.2" stroke-linejoin="round"/>
<rect x="1405.5" y="164.5" width="30" height="33" fill="#b4ee50" stroke="#101010" stroke-width="1.3"/>
<rect x="1327.5" y="226.5" width="34" height="27" fill="#90ee70" stroke="#101010" stroke-width="1.3"/>
<rect x="1402.5" y="224.5" width="27" height="20" fill="#80e890" stroke="#101010" stroke-width="1.3"/>
<path d="M1432 676 L1418 718" stroke="#1070e0" stroke-width="1.2" fill="none" opacity="0.6"/>
<path d="M1326 356 L1374 366" stroke="#0a30c8" stroke-width="1.5" opacity="0.7"/>
<rect x="1102" y="922" width="533" height="35" fill="#2d2d2d" />
<rect x="1102" y="922" width="159" height="35" fill="#eeeeee" />
<rect x="1421" y="922" width="1" height="35" fill="#454545" />
<rect x="1581" y="922" width="1" height="35" fill="#454545" />
<text x="1181" y="950" font-size="13.4" fill="#66a866" text-anchor="middle" font-weight="normal" >Max variance image</text>
<text x="1341" y="950" font-size="13.4" fill="#e0e0e0" text-anchor="middle" font-weight="normal" >Pseudo RGB image</text>
<text x="1501" y="950" font-size="13.4" fill="#e0e0e0" text-anchor="middle" font-weight="normal" >Single band</text>
<rect x="1675" y="63" width="245" height="904" fill="#2d2d2d" />
<path d="M1650 495 a5 5 0 0 1 5 -5 H1675 V539 H1655 a5 5 0 0 1 -5 -5 Z" fill="#474747"/>
<path d="M1657 503 L1665 514.5 L1657 526" fill="none" stroke="#2a2a2a" stroke-width="2.8" stroke-linecap="round"/>
<rect x="1685.5" y="74.5" width="229" height="71.5" rx="6" fill="#1e1e1e" stroke="#828282" stroke-width="1"/>
<path d="M1695 77.5 V71.5 a6 6 0 0 1 6 -6 H1741.5 a6 6 0 0 1 6 6 V77.5 Z" fill="#1e1e1e"/>
<text x="1698.5" y="79.1" font-size="10.8" fill="#e0e0e0" text-anchor="start" font-weight="normal" >Selection</text>
<rect x="1695.5" y="90.5" width="32" height="46" rx="5" fill="none" stroke="#dcdcdc" stroke-width="1.1"/>
<rect x="1738.5" y="90.5" width="40" height="46" rx="5" fill="none" stroke="#dcdcdc" stroke-width="1.1"/>
<rect x="1789.5" y="90.5" width="32" height="46" rx="5" fill="#5c5f62" stroke="#dcdcdc" stroke-width="1.1"/>
<rect x="1832.5" y="90.5" width="32" height="46" rx="5" fill="none" stroke="#dcdcdc" stroke-width="1.1"/>
<path d="M1703 100 Q1706.5 96 1711 97 Q1713.5 99 1710.5 102.5 Q1708 105 1711.5 107 L1719 110.5" fill="none" stroke="#d8d8d8" stroke-width="1.9" stroke-dasharray="2.2 1.8"/>
<circle cx="1758" cy="104" r="7" fill="none" stroke="#d8d8d8" stroke-width="1.7" stroke-dasharray="3 2"/>
<rect x="1798.5" y="96.5" width="13" height="14" fill="none" stroke="#c8c8c8" stroke-width="1.6" stroke-dasharray="3 2.3"/>
<path d="M1845.5 98 a1 1 0 0 1 2 0 V103 l1 -0.5 a1 1 0 0 1 1.7 0.5 l0.3 0.2 a1 1 0 0 1 1.7 0.6 a1 1 0 0 1 1.6 1 V108 a3.5 3.5 0 0 1 -3.5 3.5 H1848 a3 3 0 0 1 -2.3 -1.2 L1842.5 106 a1 1 0 0 1 1.6 -1.3 L1845.5 106 Z" fill="#f4f4f4" stroke="#111" stroke-width="0.6"/>
<text x="1711.5" y="127.3" font-size="11.6" fill="#e6e6e6" text-anchor="middle" font-weight="normal" >Free</text>
<text x="1758.5" y="128" font-size="11.2" fill="#e6e6e6" text-anchor="middle" font-weight="normal" >Ellipse</text>
<text x="1805.5" y="128" font-size="11.6" fill="#e8e8e8" text-anchor="middle" font-weight="normal" >Rect</text>
<text x="1848.5" y="127.3" font-size="11.6" fill="#e6e6e6" text-anchor="middle" font-weight="normal" >Pixel</text>
<rect x="1685.5" y="159" width="229" height="79" rx="6" fill="#1e1e1e" stroke="#828282" stroke-width="1"/>
<path d="M1695 162 V156 a6 6 0 0 1 6 -6 H1724.5 a6 6 0 0 1 6 6 V162 Z" fill="#1e1e1e"/>
<text x="1698.5" y="163.6" font-size="10.8" fill="#e0e0e0" text-anchor="start" font-weight="normal" >Zoom</text>
<rect x="1736.5" y="174.5" width="32" height="54" rx="5" fill="none" stroke="#dcdcdc" stroke-width="1.1"/>
<rect x="1779.5" y="174.5" width="32" height="54" rx="5" fill="none" stroke="#dcdcdc" stroke-width="1.1"/>
<rect x="1822.5" y="174.5" width="32" height="54" rx="5" fill="none" stroke="#dcdcdc" stroke-width="1.1"/>
<rect x="1865.5" y="174.5" width="32" height="54" rx="5" fill="none" stroke="#dcdcdc" stroke-width="1.1"/>
<circle cx="1707.5" cy="190" r="6" fill="none" stroke="#d8d8d8" stroke-width="1.8"/>
<line x1="1711.8" y1="194.3" x2="1717.5" y2="200" stroke="#d8d8d8" stroke-width="2"/>
<circle cx="1749.5" cy="189" r="6" fill="none" stroke="#d8d8d8" stroke-width="1.8"/>
<line x1="1753.8" y1="193.3" x2="1759.5" y2="199" stroke="#d8d8d8" stroke-width="2"/>
<line x1="1746.4" y1="189" x2="1752.6" y2="189" stroke="#d8d8d8" stroke-width="1.6"/>
<line x1="1749.5" y1="185.9" x2="1749.5" y2="192.1" stroke="#d8d8d8" stroke-width="1.6"/>
<circle cx="1793.0" cy="189" r="6" fill="none" stroke="#d8d8d8" stroke-width="1.8"/>
<line x1="1797.3" y1="193.3" x2="1803.0" y2="199" stroke="#d8d8d8" stroke-width="2"/>
<line x1="1789.9" y1="189" x2="1796.1" y2="189" stroke="#d8d8d8" stroke-width="1.6"/>
<path d="M1830 188 V183.5 H1834.5 M1842 183.5 H1846.5 V188 M1846.5 196 V200.5 H1842 M1834.5 200.5 H1830 V196" fill="none" stroke="#d8d8d8" stroke-width="1.6"/>
<circle cx="1837.5" cy="191" r="3.3" fill="none" stroke="#d8d8d8" stroke-width="1.4"/><line x1="1840" y1="193.5" x2="1842.5" y2="196" stroke="#d8d8d8" stroke-width="1.5"/>
<path d="M1881.5 182.5 V199.5 M1873 191 H1890 M1878.5 185.5 L1881.5 182.5 L1884.5 185.5 M1878.5 196.5 L1881.5 199.5 L1884.5 196.5 M1876 188 L1873 191 L1876 194 M1887 188 L1890 191 L1887 194" fill="none" stroke="#d8d8d8" stroke-width="1.6"/>
<text x="1710.5" y="219" font-size="11.6" fill="#e6e6e6" text-anchor="middle" font-weight="normal" >Reset</text>
<text x="1752.5" y="220" font-size="11.6" fill="#e6e6e6" text-anchor="middle" font-weight="normal" >In</text>
<text x="1795.5" y="220" font-size="11.6" fill="#e6e6e6" text-anchor="middle" font-weight="normal" >Out</text>
<text x="1838.5" y="220" font-size="11.6" fill="#e6e6e6" text-anchor="middle" font-weight="normal" >Area</text>
<text x="1881.5" y="220" font-size="11.6" fill="#e6e6e6" text-anchor="middle" font-weight="normal" >Pan</text>
<rect x="1685.5" y="250.5" width="229" height="66.0" rx="6" fill="#1e1e1e" stroke="#828282" stroke-width="1"/>
<path d="M1695 253.5 V247.5 a6 6 0 0 1 6 -6 H1780 a6 6 0 0 1 6 6 V253.5 Z" fill="#1e1e1e"/>
<text x="1698.5" y="255.1" font-size="10.8" fill="#e0e0e0" text-anchor="start" font-weight="normal" >Include / Exclude</text>
<path d="M1705.5 273 V287.3 H1720.9" fill="none" stroke="#d8d8d8" stroke-width="2"/><rect x="1709.7" y="268.6" width="15" height="14.5" rx="1.6" fill="none" stroke="#d8d8d8" stroke-width="2"/><path d="M1717.2 272 V279.6 M1713.4 275.8 H1721" stroke="#d8d8d8" stroke-width="2"/>
<rect x="1770.4" y="269.5" width="17.1" height="16.9" rx="1.8" fill="none" stroke="#d8d8d8" stroke-width="2"/><path d="M1779 273 V283 M1774 278 H1784" stroke="#d8d8d8" stroke-width="2"/>
<rect x="1834.3" y="268.5" width="2.1" height="2.1" fill="#d8d8d8"/>
<rect x="1838.6" y="268.5" width="2.1" height="2.1" fill="#d8d8d8"/>
<rect x="1842.9" y="268.5" width="2.1" height="2.1" fill="#d8d8d8"/>
<rect x="1847.2" y="268.5" width="2.1" height="2.1" fill="#d8d8d8"/>
<rect x="1851.5" y="268.5" width="2.1" height="2.1" fill="#d8d8d8"/>
<rect x="1834.3" y="272.8" width="2.1" height="2.1" fill="#d8d8d8"/>
<rect x="1834.3" y="277.1" width="2.1" height="2.1" fill="#d8d8d8"/>
<rect x="1834.3" y="281.4" width="2.1" height="2.1" fill="#d8d8d8"/>
<rect x="1834.3" y="285.7" width="2.1" height="2.1" fill="#d8d8d8"/>
<rect x="1838.6" y="285.7" width="2.1" height="2.1" fill="#d8d8d8"/>
<rect x="1851.5" y="272.8" width="2.1" height="2.1" fill="#d8d8d8"/>
<rect x="1851.5" y="277.1" width="2.1" height="2.1" fill="#d8d8d8"/>
<g><path d="M1844 278.2 L1852.4 286.4 M1852.4 278.2 L1844 286.4" stroke="#d8d8d8" stroke-width="2"/></g>
<text x="1715" y="304" font-size="11.8" fill="#e6e6e6" text-anchor="middle" font-weight="normal" >Include</text>
<text x="1779" y="304" font-size="11.8" fill="#e6e6e6" text-anchor="middle" font-weight="normal" >Include Only</text>
<text x="1844" y="304" font-size="11.8" fill="#e6e6e6" text-anchor="middle" font-weight="normal" >Exclude</text>
<rect x="1685.5" y="328.5" width="229" height="65.5" rx="6" fill="#1e1e1e" stroke="#828282" stroke-width="1"/>
<path d="M1695 331.5 V325.5 a6 6 0 0 1 6 -6 H1727.6 a6 6 0 0 1 6 6 V331.5 Z" fill="#1e1e1e"/>
<text x="1698.5" y="333.1" font-size="10.8" fill="#e0e0e0" text-anchor="start" font-weight="normal" >Select</text>
<circle cx="1715.5" cy="352.9" r="0.9" fill="#e8e8e8" opacity="0.30"/>
<circle cx="1715.5" cy="355.5" r="0.9" fill="#e8e8e8" opacity="0.34"/>
<circle cx="1715.5" cy="358.1" r="0.9" fill="#e8e8e8" opacity="0.30"/>
<circle cx="1718.1" cy="350.3" r="0.9" fill="#e8e8e8" opacity="0.38"/>
<circle cx="1718.1" cy="352.9" r="0.9" fill="#e8e8e8" opacity="0.51"/>
<circle cx="1718.1" cy="355.5" r="0.9" fill="#e8e8e8" opacity="0.56"/>
<circle cx="1718.1" cy="358.1" r="0.9" fill="#e8e8e8" opacity="0.51"/>
<circle cx="1718.1" cy="360.7" r="0.9" fill="#e8e8e8" opacity="0.38"/>
<circle cx="1720.7" cy="347.7" r="0.9" fill="#e8e8e8" opacity="0.30"/>
<circle cx="1720.7" cy="350.3" r="0.9" fill="#e8e8e8" opacity="0.51"/>
<circle cx="1720.7" cy="352.9" r="0.9" fill="#e8e8e8" opacity="0.69"/>
<circle cx="1720.7" cy="355.5" r="0.9" fill="#e8e8e8" opacity="0.78"/>
<circle cx="1720.7" cy="358.1" r="0.9" fill="#e8e8e8" opacity="0.69"/>
<circle cx="1720.7" cy="360.7" r="0.9" fill="#e8e8e8" opacity="0.51"/>
<circle cx="1720.7" cy="363.3" r="0.9" fill="#e8e8e8" opacity="0.30"/>
<circle cx="1723.3" cy="347.7" r="0.9" fill="#e8e8e8" opacity="0.34"/>
<circle cx="1723.3" cy="350.3" r="0.9" fill="#e8e8e8" opacity="0.56"/>
<circle cx="1723.3" cy="352.9" r="0.9" fill="#e8e8e8" opacity="0.78"/>
<circle cx="1723.3" cy="355.5" r="0.9" fill="#e8e8e8" opacity="1.00"/>
<circle cx="1723.3" cy="358.1" r="0.9" fill="#e8e8e8" opacity="0.78"/>
<circle cx="1723.3" cy="360.7" r="0.9" fill="#e8e8e8" opacity="0.56"/>
<circle cx="1723.3" cy="363.3" r="0.9" fill="#e8e8e8" opacity="0.34"/>
<circle cx="1725.9" cy="347.7" r="0.9" fill="#e8e8e8" opacity="0.30"/>
<circle cx="1725.9" cy="350.3" r="0.9" fill="#e8e8e8" opacity="0.51"/>
<circle cx="1725.9" cy="352.9" r="0.9" fill="#e8e8e8" opacity="0.69"/>
<circle cx="1725.9" cy="355.5" r="0.9" fill="#e8e8e8" opacity="0.78"/>
<circle cx="1725.9" cy="358.1" r="0.9" fill="#e8e8e8" opacity="0.69"/>
<circle cx="1725.9" cy="360.7" r="0.9" fill="#e8e8e8" opacity="0.51"/>
<circle cx="1725.9" cy="363.3" r="0.9" fill="#e8e8e8" opacity="0.30"/>
<circle cx="1728.5" cy="350.3" r="0.9" fill="#e8e8e8" opacity="0.38"/>
<circle cx="1728.5" cy="352.9" r="0.9" fill="#e8e8e8" opacity="0.51"/>
<circle cx="1728.5" cy="355.5" r="0.9" fill="#e8e8e8" opacity="0.56"/>
<circle cx="1728.5" cy="358.1" r="0.9" fill="#e8e8e8" opacity="0.51"/>
<circle cx="1728.5" cy="360.7" r="0.9" fill="#e8e8e8" opacity="0.38"/>
<circle cx="1731.1" cy="352.9" r="0.9" fill="#e8e8e8" opacity="0.30"/>
<circle cx="1731.1" cy="355.5" r="0.9" fill="#e8e8e8" opacity="0.34"/>
<circle cx="1731.1" cy="358.1" r="0.9" fill="#e8e8e8" opacity="0.30"/>
<path d="M1788 349 H1799.5 a3 3 0 0 1 3 3 V363 M1802.5 363.5 H1788 V349" fill="none" stroke="#d8d8d8" stroke-width="1.5" stroke-dasharray="1.8 1.6"/>
<text x="1723.5" y="382" font-size="11.8" fill="#e6e6e6" text-anchor="middle" font-weight="normal" >By Density</text>
<text x="1796.5" y="382" font-size="11.8" fill="#e6e6e6" text-anchor="middle" font-weight="normal" >Border pixels</text>
<rect x="1685.5" y="406.5" width="229" height="65.5" rx="6" fill="#1e1e1e" stroke="#828282" stroke-width="1"/>
<path d="M1695 409.5 V403.5 a6 6 0 0 1 6 -6 H1767.7 a6 6 0 0 1 6 6 V409.5 Z" fill="#1e1e1e"/>
<text x="1698.5" y="411.1" font-size="10.8" fill="#e0e0e0" text-anchor="start" font-weight="normal" >Spectral filters</text>
<text x="1697.5" y="438" font-size="13.4" fill="#e6e6e6" text-anchor="start" font-weight="normal" >None</text>
<path d="M1885.5 441 L1886.3 436.5 L1897.2 425.7 a2.1 2.1 0 0 1 3 3 L1889.6 440.2 Z" fill="none" stroke="#d8d8d8" stroke-width="2.4" stroke-linejoin="round"/>
<text x="1892.5" y="460" font-size="11.6" fill="#e6e6e6" text-anchor="middle" font-weight="normal" >Edit</text>
<rect x="1685.5" y="484.5" width="229" height="52.0" rx="6" fill="#1e1e1e" stroke="#828282" stroke-width="1"/>
<path d="M1695 487.5 V481.5 a6 6 0 0 1 6 -6 H1798 a6 6 0 0 1 6 6 V487.5 Z" fill="#1e1e1e"/>
<text x="1698.5" y="489.1" font-size="10.8" fill="#e0e0e0" text-anchor="start" font-weight="normal" >Model Pretreatments</text>
<circle cx="1707.7" cy="513.3" r="8.8" fill="none" stroke="#c8c8c8" stroke-width="1.3"/>
<text x="1726.5" y="519" font-size="13.2" fill="#e6e6e6" text-anchor="start" font-weight="normal" >SNV</text>
<circle cx="1779" cy="513.3" r="9" fill="#555555"/>
<path d="M1775.2 513.2 L1778.2 516.2 L1783.3 510.6" fill="none" stroke="#f4f4f4" stroke-width="2.3"/>
<text x="1797.5" y="519" font-size="13.4" fill="#7a7a7a" text-anchor="start" font-weight="normal" >Center</text>
<rect x="1685.5" y="548.5" width="229" height="65.5" rx="6" fill="#1e1e1e" stroke="#828282" stroke-width="1"/>
<path d="M1695 551.5 V545.5 a6 6 0 0 1 6 -6 H1757.5 a6 6 0 0 1 6 6 V551.5 Z" fill="#1e1e1e"/>
<text x="1698.5" y="553.1" font-size="10.8" fill="#e0e0e0" text-anchor="start" font-weight="normal" >Model (PCA)</text>
<path d="M1708 574 L1714 567.5 L1719 572.5 L1727.5 566 M1708 583.5 L1715 576 L1720 581 L1728 574.5" fill="none" stroke="#d8d8d8" stroke-width="1.6"/>
<g transform="translate(1618.75 -414.8)"><path d="M148 983.8 H163.5 M152.5 983.3 V982.3 H159.5 V983.3 M149.6 984 V997.5 a1.6 1.6 0 0 0 1.6 1.6 H160.9 a1.6 1.6 0 0 0 1.6 -1.6 V984 M153.5 987 V996 M158.3 987 V996" fill="none" stroke="#d8d8d8" stroke-width="2"/></g>
<text x="1719" y="602" font-size="11.8" fill="#e6e6e6" text-anchor="middle" font-weight="normal" >Statistics</text>
<text x="1774.5" y="602" font-size="11.8" fill="#e6e6e6" text-anchor="middle" font-weight="normal" >Remove</text>
<rect x="1685.5" y="626.5" width="229" height="65.5" rx="6" fill="#1e1e1e" stroke="#828282" stroke-width="1"/>
<path d="M1695 629.5 V623.5 a6 6 0 0 1 6 -6 H1775 a6 6 0 0 1 6 6 V629.5 Z" fill="#1e1e1e"/>
<text x="1698.5" y="631.1" font-size="10.8" fill="#e0e0e0" text-anchor="start" font-weight="normal" >Components (2)</text>
<text x="1706" y="660.8" font-size="17.5" fill="#e8e8e8" text-anchor="middle" font-weight="normal" >+1</text>
<text x="1750" y="660.8" font-size="17.5" fill="#e8e8e8" text-anchor="middle" font-weight="normal" >−1</text>
<path d="M1787.5 661.5 L1788.3 657 L1799.2 646.2 a2.1 2.1 0 0 1 3 3 L1791.6 660.7 Z" fill="none" stroke="#d8d8d8" stroke-width="2.4" stroke-linejoin="round"/>
<text x="1707" y="680" font-size="11.8" fill="#e6e6e6" text-anchor="middle" font-weight="normal" >Add</text>
<text x="1751" y="680" font-size="11.8" fill="#e6e6e6" text-anchor="middle" font-weight="normal" >Remove</text>
<text x="1795" y="680" font-size="11.8" fill="#e6e6e6" text-anchor="middle" font-weight="normal" >Set</text>
<rect x="1685.5" y="704.8" width="229" height="119.20000000000005" rx="6" fill="#1e1e1e" stroke="#828282" stroke-width="1"/>
<path d="M1695 707.8 V701.8 a6 6 0 0 1 6 -6 H1726.3 a6 6 0 0 1 6 6 V707.8 Z" fill="#1e1e1e"/>
<text x="1698.5" y="709.4" font-size="10.8" fill="#e0e0e0" text-anchor="start" font-weight="normal" >Other</text>
<path d="M1711.2 726.1 A7 7 0 1 1 1703.9 729.5" fill="none" stroke="#d8d8d8" stroke-width="1.9"/><path d="M1711.8 722.3 L1708.3 725.9 L1711.8 729.3" fill="none" stroke="#d8d8d8" stroke-width="1.9"/>
<text x="1710.5" y="757.5" font-size="11.8" fill="#e6e6e6" text-anchor="middle" font-weight="normal" >Reset</text>
<text x="1695.3" y="783" font-size="12.4" fill="#e6e6e6" text-anchor="start" font-weight="normal" >Spatial reduce (none)</text>
<rect x="1695.5" y="790.5" width="209.5" height="24" fill="#1e1e1e" stroke="#8a8a8a" stroke-width="1"/>
<text x="1700.6" y="808.5" font-size="14.2" fill="#e8e8e8" text-anchor="start" font-weight="normal" >Automatic</text>
<path d="M1886 798.5 H1897 L1891.5 805 Z" fill="#e0e0e0"/>
<rect x="500" y="967" width="1420" height="65" fill="url(#gTool)" />
<text x="512.2" y="989" font-size="12.3" fill="#e6e6e6" text-anchor="start" font-weight="normal" >Segmentation</text>
<rect x="512.5" y="996.5" width="198.5" height="24.5" fill="#1e1e1e" stroke="#8a8a8a" stroke-width="1"/>
<text x="518" y="1015" font-size="13.3" fill="#e8e8e8" text-anchor="start" font-weight="normal" >Measurement</text>
<path d="M693 1005.5 H704.5 L698.8 1012.5 Z" fill="#e0e0e0"/>
<rect x="724" y="977" width="2" height="44" fill="#8a8a8a" />
<rect x="830" y="977" width="2" height="44" fill="#8a8a8a" />
<rect x="1024.3" y="977" width="2" height="44" fill="#8a8a8a" />
<path d="M770 983.5 H786 M770 987.5 H786 M770 991.5 H786 M770 995.5 H779" fill="none" stroke="#d8d8d8" stroke-width="1.4"/><path d="M784 993 V1000.5 M780 996.8 H788" stroke="#d8d8d8" stroke-width="1.6"/>
<text x="778" y="1017" font-size="12" fill="#e6e6e6" text-anchor="middle" font-weight="normal" >Add Sample(s)</text>
<path d="M866 982 H888.5 V989 M866 982 V989" fill="none" stroke="#d8d8d8" stroke-width="1.5" stroke-dasharray="2 2"/>
<path d="M875 986 a1 1 0 0 1 2 0 V991.5 l1 -0.4 a1 1 0 0 1 1.7 0.4 l0.3 0.2 a1 1 0 0 1 1.7 0.6 a1 1 0 0 1 1.6 1 V997 a4 4 0 0 1 -4 4 H878 a3 3 0 0 1 -2.3 -1.2 L872 995 a1 1 0 0 1 1.6 -1.3 L875 995 Z" fill="none" stroke="#d8d8d8" stroke-width="1.3"/>
<text x="877.5" y="1017" font-size="12" fill="#e6e6e6" text-anchor="middle" font-weight="normal" >Select pixels</text>
<rect x="957.5" y="982.5" width="18" height="16" rx="1" fill="none" stroke="#d8d8d8" stroke-width="1.6"/><path d="M962 990.5 H971 M968 987 L971.5 990.5 L968 994" fill="none" stroke="#d8d8d8" stroke-width="1.6"/>
<rect x="955" y="986.5" width="5" height="8" fill="#3b3b3b"/>
<path d="M957.5 990.5 H971 M968 987 L971.5 990.5 L968 994" fill="none" stroke="#d8d8d8" stroke-width="1.6"/>
<text x="967" y="1017" font-size="12" fill="#e6e6e6" text-anchor="middle" font-weight="normal" >Go to Sample(s)</text>
<circle cx="1050.7" cy="999.3" r="8.5" fill="none" stroke="#c8c8c8" stroke-width="1.3"/>
<text x="1070.3" y="1004.5" font-size="13.7" fill="#e6e6e6" text-anchor="start" font-weight="normal" >Show descriptors</text>
<rect x="1808" y="974" width="100" height="50" rx="5" fill="#9f7ba7"/>
<rect x="1848.3" y="983.3" width="13.6" height="13.4" rx="1.5" fill="none" stroke="#ffffff" stroke-width="2.3"/><path d="M1862.6 990 L1867 985 V995 Z" fill="#ffffff"/>
<text x="1858" y="1016" font-size="12" fill="#f4f4f4" text-anchor="middle" font-weight="normal" >Recorder</text></svg></body></html>
